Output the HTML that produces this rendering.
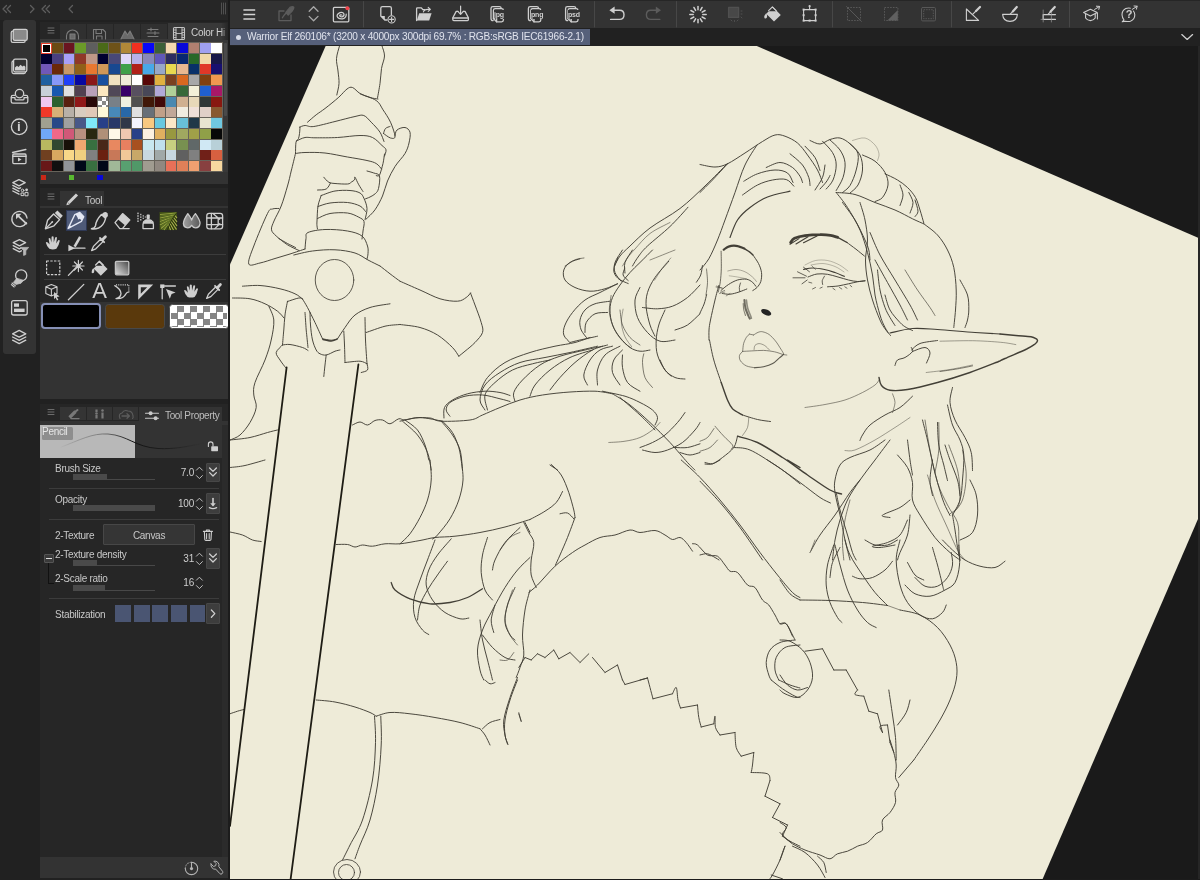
<!DOCTYPE html>
<html lang="en">
<head>
<meta charset="utf-8">
<title>Warrior Elf 260106 - Clip Studio Paint</title>
<style>
*{box-sizing:border-box;margin:0;padding:0}
html,body{width:1200px;height:880px;overflow:hidden;background:#202020}
body{font-family:"Liberation Sans",sans-serif;color:#d6d6d6;font-size:10px;position:relative}
.abs{position:absolute}
svg{position:absolute;overflow:visible}
.ic{stroke:#cfcfcf;fill:none;stroke-width:1.3;stroke-linecap:round;stroke-linejoin:round}
.fl{fill:#cfcfcf;stroke:none}
.dim{opacity:.33}
#sw{position:absolute;left:40.600px;top:42.400px;width:182px;height:129.600px;display:grid;grid-template-columns:repeat(16,11.370px);grid-auto-rows:10.770px;background:#67635a}
#sw i{display:block;margin:0.400px 0.450px}
#sw i.tr{background:conic-gradient(#fff 25%,#888 0 50%,#fff 0 75%,#888 0);background-size:8px 8px}
.lbl{position:absolute;will-change:transform;color:#c8c8c8;font-size:10px;white-space:nowrap;letter-spacing:-0.28px}
.num{position:absolute;will-change:transform;color:#cecece;letter-spacing:-0.2px;font-size:10px;text-align:right;white-space:nowrap}
.sl{position:absolute;height:6px;border-bottom:1px solid #484848}
.sl b{position:absolute;left:0;top:0;height:6px;background:#4a4a4a;display:block}
.btn{position:absolute;background:#3d3d3d;border:1px solid #474747;border-radius:1px}
.hr{position:absolute;height:1px;background:#3c3c3c}
</style>
</head>
<body>
<!-- ============ LEFT DOCK ============ -->
<div class="abs" style="left:0;top:0;width:228px;height:880px;background:#212121"></div>
<div class="abs" style="left:0;top:0;width:228px;height:20px;background:#262626"></div>
<!-- icon strip -->
<div class="abs" style="left:3px;top:20px;width:33px;height:334px;background:#333;border-radius:3px"></div>
<!-- color history panel -->
<div class="abs" style="left:40px;top:22px;width:188px;height:162px;background:#383838"></div>
<div class="abs" style="left:40px;top:22px;width:188px;height:17px;background:#262626"></div>
<div class="abs" style="left:60px;top:24px;width:26px;height:15px;background:#303030"></div>
<div class="abs" style="left:87px;top:24px;width:26px;height:15px;background:#303030"></div>
<div class="abs" style="left:114px;top:24px;width:26px;height:15px;background:#303030"></div>
<div class="abs" style="left:141px;top:24px;width:26px;height:15px;background:#303030"></div>
<div class="abs" style="left:168px;top:23px;width:60px;height:17px;background:#383838"></div>
<div class="lbl" style="left:191px;top:27px;font-size:10px;color:#d0d0d0">Color Hi</div>
<div class="abs" style="left:221px;top:23px;width:7px;height:17px;background:linear-gradient(90deg,rgba(38,38,38,0),#262626)"></div>
<div id="sw">
<i style="background:#000000"></i><i style="background:#6b4a12"></i><i style="background:#6a1520"></i><i style="background:#6b9a28"></i><i style="background:#5e5e5e"></i><i style="background:#4a6a18"></i><i style="background:#6e5218"></i><i style="background:#b08838"></i><i style="background:#f03020"></i><i style="background:#0808f8"></i><i style="background:#3c6038"></i><i style="background:#f4d8b0"></i><i style="background:#0808d8"></i><i style="background:#b08070"></i><i style="background:#a0a0f0"></i><i style="background:#ffffff"></i><i style="background:#000030"></i><i style="background:#4a4080"></i><i style="background:#a8a0f8"></i><i style="background:#903828"></i><i style="background:#c09888"></i><i style="background:#000030"></i><i style="background:#484878"></i><i style="background:#e0d8f8"></i><i style="background:#b8b0e8"></i><i style="background:#8888b8"></i><i style="background:#6058b8"></i><i style="background:#2c2c60"></i><i style="background:#082870"></i><i style="background:#286828"></i><i style="background:#f0d8a8"></i><i style="background:#181848"></i><i style="background:#7058b8"></i><i style="background:#6a2808"></i><i style="background:#c89868"></i><i style="background:#906018"></i><i style="background:#e87830"></i><i style="background:#d09858"></i><i style="background:#184890"></i><i style="background:#40a048"></i><i style="background:#b02018"></i><i style="background:#48a8e8"></i><i style="background:#98a8c8"></i><i style="background:#e8d850"></i><i style="background:#e8b890"></i><i style="background:#083068"></i><i style="background:#e03828"></i><i style="background:#181070"></i><i style="background:#2060a0"></i><i style="background:#8898f8"></i><i style="background:#2040f8"></i><i style="background:#0808a0"></i><i style="background:#8a1818"></i><i style="background:#1850a0"></i><i style="background:#f0e0c0"></i><i style="background:#f0ecd8"></i><i style="background:#ffffff"></i><i style="background:#580808"></i><i style="background:#e0b040"></i><i style="background:#7a4020"></i><i style="background:#d86820"></i><i style="background:#a8a8a8"></i><i style="background:#804010"></i><i style="background:#f09850"></i><i style="background:#c8d0d8"></i><i style="background:#1858b0"></i><i style="background:#e0e0e0"></i><i style="background:#504050"></i><i style="background:#b8a0b8"></i><i style="background:#fce8c0"></i><i style="background:#504858"></i><i style="background:#380068"></i><i style="background:#585060"></i><i style="background:#484858"></i><i style="background:#b0a8d8"></i><i style="background:#b0d098"></i><i style="background:#386838"></i><i style="background:#f4f0d8"></i><i style="background:#2060d0"></i><i style="background:#a81868"></i><i style="background:#f0c8f0"></i><i style="background:#2c6030"></i><i style="background:#582010"></i><i style="background:#901818"></i><i style="background:#280808"></i><i class="tr"></i><i style="background:#788088"></i><i style="background:#f0f0e0"></i><i style="background:#505050"></i><i style="background:#401808"></i><i style="background:#400808"></i><i style="background:#4888b0"></i><i style="background:#d0b090"></i><i style="background:#e8d8b8"></i><i style="background:#303838"></i><i style="background:#881810"></i><i style="background:#f03828"></i><i style="background:#d8b078"></i><i style="background:#b8b0a8"></i><i style="background:#d8ccc0"></i><i style="background:#e0c8b8"></i><i style="background:#fff8d8"></i><i style="background:#4888b8"></i><i style="background:#2868a8"></i><i style="background:#e0e0e0"></i><i style="background:#687078"></i><i style="background:#c0a088"></i><i style="background:#c0a898"></i><i style="background:#f0ece0"></i><i style="background:#f0e0d8"></i><i style="background:#e0d0c8"></i><i style="background:#885830"></i><i style="background:#a0a090"></i><i style="background:#284888"></i><i style="background:#a0a0a0"></i><i style="background:#485888"></i><i style="background:#80e8f8"></i><i style="background:#284088"></i><i style="background:#283868"></i><i style="background:#303848"></i><i style="background:#f4f4fc"></i><i style="background:#f8c880"></i><i style="background:#68c8e0"></i><i style="background:#fce8c8"></i><i style="background:#68c0d8"></i><i style="background:#203848"></i><i style="background:#e8e4d0"></i><i style="background:#70c8e0"></i><i style="background:#70a8f8"></i><i style="background:#f06888"></i><i style="background:#d05878"></i><i style="background:#b89080"></i><i style="background:#282810"></i><i style="background:#b09078"></i><i style="background:#fff8e8"></i><i style="background:#f0c8b0"></i><i style="background:#284088"></i><i style="background:#fcf0e0"></i><i style="background:#e0b060"></i><i style="background:#989840"></i><i style="background:#a0a860"></i><i style="background:#a0a048"></i><i style="background:#90a048"></i><i style="background:#080808"></i><i style="background:#b8b860"></i><i style="background:#304830"></i><i style="background:#181008"></i><i style="background:#f0a870"></i><i style="background:#387040"></i><i style="background:#482818"></i><i style="background:#e88860"></i><i style="background:#e88060"></i><i style="background:#a85020"></i><i style="background:#c8e8f0"></i><i style="background:#c0e0ec"></i><i style="background:#c8d080"></i><i style="background:#789050"></i><i style="background:#606868"></i><i style="background:#d0e8f4"></i><i style="background:#b8d0d8"></i><i style="background:#704020"></i><i style="background:#d8a860"></i><i style="background:#f8d888"></i><i style="background:#f0d080"></i><i style="background:#808080"></i><i style="background:#6a2010"></i><i style="background:#c87858"></i><i style="background:#f0c898"></i><i style="background:#c8a868"></i><i style="background:#c8d8e0"></i><i style="background:#a0a8a8"></i><i style="background:#c8d8e0"></i><i style="background:#606060"></i><i style="background:#808080"></i><i style="background:#702018"></i><i style="background:#d86040"></i><i style="background:#681818"></i><i style="background:#101010"></i><i style="background:#909498"></i><i style="background:#000818"></i><i style="background:#387040"></i><i style="background:#000818"></i><i style="background:#a0b898"></i><i style="background:#58a070"></i><i style="background:#509868"></i><i style="background:#a09c90"></i><i style="background:#908880"></i><i style="background:#e87058"></i><i style="background:#e08058"></i><i style="background:#f0a070"></i><i style="background:#884040"></i><i style="background:#f8d8a0"></i></div>
<div class="abs" style="left:41px;top:42.800px;width:11.400px;height:10.800px;border:1px solid #e8402c;box-shadow:inset 0 0 0 1px #fff"></div>
<div class="abs" style="left:224px;top:43px;width:3px;height:73px;background:#4a4a4a;border-radius:1px"></div>
<div class="abs" style="left:40px;top:172px;width:188px;height:12px;background:#333"></div>
<div class="abs" style="left:41px;top:175px;width:5px;height:5px;background:#c82818"></div>
<div class="abs" style="left:69px;top:175px;width:5px;height:5px;background:#58b830"></div>
<div class="abs" style="left:97px;top:175px;width:6px;height:5px;background:#0808d8"></div>
<!-- tool panel -->
<div class="abs" style="left:40px;top:188px;width:188px;height:211px;background:#333"></div>
<div class="abs" style="left:40px;top:188px;width:188px;height:18px;background:#262626"></div>
<div class="abs" style="left:60px;top:191px;width:44px;height:15px;background:#333"></div>
<div class="lbl" style="left:85px;top:195px;color:#c8c8c8">Tool</div>
<div class="abs" style="left:40px;top:208px;width:188px;height:94px;background:#262626"></div>
<div class="hr" style="left:44px;top:254px;width:182px"></div>
<div class="hr" style="left:44px;top:279px;width:182px"></div>
<div class="abs" style="left:65.500px;top:210.300px;width:21.400px;height:21px;background:#4e5a78;border:1px solid #2e3854"></div>
<!-- colour chips -->
<div class="abs" style="left:40.500px;top:302.500px;width:60px;height:26px;background:#000;border:2px solid #8690b6;border-radius:4px"></div>
<div class="abs" style="left:105px;top:303.500px;width:59.500px;height:25px;background:#5a390c;border:1px solid #484848;border-radius:3.500px"></div>
<div class="abs" style="left:169px;top:303.500px;width:59.500px;height:25px;border:1px solid #4c4c4c;border-radius:3.500px;background:#fff"></div><div class="abs" style="left:171px;top:305.500px;width:55.500px;height:21px;border-radius:2px;background:#fff conic-gradient(#858585 25%,#fff 0 50%,#858585 0 75%,#fff 0);background-size:13px 13px;background-position:0 0"></div>
<!-- tool property panel -->
<div class="abs" style="left:40px;top:404px;width:188px;height:474px;background:#262626"></div>
<div class="abs" style="left:40px;top:404px;width:188px;height:20px;background:#262626"></div>
<div class="abs" style="left:60px;top:407px;width:26px;height:13px;background:#343434"></div>
<div class="abs" style="left:87px;top:407px;width:25px;height:13px;background:#343434"></div>
<div class="abs" style="left:113px;top:407px;width:25px;height:13px;background:#343434"></div>
<div class="abs" style="left:139px;top:407px;width:83px;height:14px;background:#333"></div>
<div class="lbl" style="left:165px;top:410px;color:#bdbdbd;letter-spacing:-0.350px">Tool Property</div>
<div class="abs" style="left:40px;top:421px;width:188px;height:4px;background:#333"></div>
<div class="abs" style="left:40px;top:424px;width:188px;height:34px;background:#333"></div>
<div class="abs" style="left:40px;top:425px;width:94.500px;height:33px;background:#b8b8b8"></div>
<div class="abs" style="left:42px;top:426.500px;width:31px;height:13px;background:#8e8e8e;border-radius:1.500px"></div>
<div class="lbl" style="left:42px;top:426px;color:#e8e8e8">Pencil</div>
<div class="lbl" style="left:55px;top:462.8px">Brush Size</div>
<div class="sl" style="left:73px;top:474px;width:82px"><b style="width:34px"></b></div>
<div class="num" style="left:160px;top:466.8px;width:34px">7.0</div>
<div class="btn" style="left:206px;top:463px;width:14px;height:19px"></div>
<div class="hr" style="left:49px;top:488px;width:170px"></div>
<div class="lbl" style="left:55px;top:493.8px">Opacity</div>
<div class="sl" style="left:73px;top:505px;width:82px;border-bottom:0"><b style="width:82px"></b></div>
<div class="num" style="left:160px;top:497.8px;width:34px">100</div>
<div class="btn" style="left:206px;top:493px;width:14px;height:21px"></div>
<div class="hr" style="left:49px;top:519px;width:170px"></div>
<div class="lbl" style="left:55px;top:529.8px">2-Texture</div>
<div class="btn" style="left:103px;top:524px;width:92px;height:21px;background:#353535"></div>
<div class="lbl" style="left:103px;top:529.8px;width:92px;text-align:center">Canvas</div>
<div class="lbl" style="left:55px;top:548.8px">2-Texture density</div>
<div class="sl" style="left:73px;top:560px;width:82px"><b style="width:24px"></b></div>
<div class="num" style="left:160px;top:552.8px;width:34px">31</div>
<div class="btn" style="left:206px;top:548px;width:14px;height:21px"></div>
<div class="abs" style="left:44px;top:554px;width:10px;height:9px;background:#3a3a3a;border:1px solid #555;border-radius:1px"></div>
<div class="abs" style="left:46px;top:558px;width:6px;height:1px;background:#ddd"></div>
<div class="abs" style="left:48px;top:563px;width:6px;height:21px;border-left:1px solid #111;border-bottom:1px solid #111"></div>
<div class="lbl" style="left:55px;top:572.8px">2-Scale ratio</div>
<div class="sl" style="left:73px;top:585px;width:82px"><b style="width:32px"></b></div>
<div class="num" style="left:160px;top:576.8px;width:34px">16</div>
<div class="hr" style="left:49px;top:598px;width:170px"></div>
<div class="lbl" style="left:55px;top:608.8px">Stabilization</div>
<div class="abs" style="left:115px;top:605px;width:16px;height:17px;background:#4a5572"></div>
<div class="abs" style="left:134px;top:605px;width:16px;height:17px;background:#4a5572"></div>
<div class="abs" style="left:152px;top:605px;width:16px;height:17px;background:#4a5572"></div>
<div class="abs" style="left:171px;top:605px;width:16px;height:17px;background:#4a5572"></div>
<div class="abs" style="left:190px;top:605px;width:15px;height:17px;background:#4a5572"></div>
<div class="btn" style="left:206px;top:603px;width:14px;height:21px"></div>
<div class="abs" style="left:222px;top:425px;width:6px;height:432px;background:#2b2b2b"></div>
<div class="abs" style="left:40px;top:857px;width:188px;height:21px;background:#333"></div>
<div class="abs" style="left:228px;top:0;width:2px;height:880px;background:#1c1c1c"></div>
<!-- top-left chevrons -->
<svg width="228" height="20" viewBox="0 0 228 20" style="left:0;top:0" fill="none" stroke="#5e5e5e" stroke-width="1.3" stroke-linecap="round" stroke-linejoin="round">
<path d="M6.5 5.5 L3 9 L6.5 12.5 M10.5 5.5 L7 9 L10.5 12.5"/>
<path d="M30.5 5.5 L34 9 L30.5 12.5"/>
<path d="M45.5 5.5 L42 9 L45.5 12.5 M49.5 5.5 L46 9 L49.5 12.5"/>
<path d="M72.5 5.5 L69 9 L72.5 12.5"/>
<path d="M221.5 3 V14 M223.5 3 V14 M225.5 3 V14" stroke="#505050" stroke-width="1"/>
</svg>
<!-- left icon strip -->
<svg width="33" height="334" viewBox="3 20 33 334" style="left:3px;top:20px" class="ic">
<!-- 1 sub view -->
<rect x="11.2" y="31.2" width="14" height="11.2" rx="1.6"/>
<rect x="13.2" y="29.4" width="14" height="11" rx="1.6" fill="#8a8a8a"/>
<!-- 2 navigator -->
<rect x="12" y="61" width="13.5" height="12.5" rx="1.5"/>
<rect x="13.6" y="59.2" width="13.2" height="12.6" rx="1.5" fill="#333"/>
<path class="fl" d="M15 70.5 V67.5 L17 65.8 L18.5 67 L20.5 64.8 L22.5 66.6 L24 65.6 L25.4 66.8 V70.5 Z" fill="#9a9a9a" stroke="none"/>
<!-- 3 material tray -->
<circle cx="19.5" cy="93.6" r="4.2"/>
<path d="M14.8 95.4 H13 Q11.2 95.4 11.2 97.2 V101.4 Q11.2 103.2 13 103.2 H26 Q27.8 103.2 27.8 101.4 V97.2 Q27.8 95.4 26 95.4 H24.2"/>
<path d="M11.4 97.6 H15 V99 Q15 99.8 15.8 99.8 H23.2 Q24 99.8 24 99 V97.6 H27.6"/>
<!-- 4 info -->
<circle cx="19.2" cy="126.8" r="7.8"/>
<!-- 5 animation clapper -->
<rect x="12.8" y="154" width="13.2" height="9.6" rx="1"/>
<path d="M12.6 152.6 L25.8 149.6 M13 156.2 H26" stroke-width="1.5"/>
<path d="M18 157.4 L21.6 159.4 L18 161.4 Z" class="fl"/>
<!-- 6 layers + shapes -->
<path d="M19 179.6 L25.2 182.6 L19 185.8 L12.8 182.6 Z M12.8 185.4 L19 188.6 L20.6 187.8 M12.8 188.2 L19 191.4 M12.8 191 L19 194.2"/>
<circle cx="22.6" cy="190.4" r="1.3" stroke-width="1"/><circle cx="26.6" cy="189.8" r="1.4" class="fl"/>
<rect x="21.4" y="193" width="2.4" height="2.6" stroke-width="1"/><rect x="25.4" y="192.4" width="2.6" height="3.4" stroke-width="1"/>
<!-- 7 quick access -->
<path d="M26.2 222.6 A7.6 7.6 0 1 1 27 218"/>
<path d="M17 214.8 L26.4 223.6" stroke-width="1.8"/>
<path d="M16 213.8 H21.4 L16 219.2 Z" class="fl" stroke="#cfcfcf" stroke-width=".6"/>
<!-- 8 layers + funnel -->
<path d="M19.4 239.6 L25.6 242.6 L19.4 245.8 L13.2 242.6 Z M13.2 245.6 L19.4 248.8 L21 248 M13.2 248.6 L19.4 251.8 L21.4 250.8"/>
<path d="M20.8 247.4 H28.6 L25.8 250.8 V254.6 L23.6 255.4 V250.8 Z" fill="#b8b8b8" stroke="#b8b8b8" stroke-width=".8"/>
<!-- 9 bulb -->
<circle cx="21.2" cy="275.4" r="5.6"/>
<path d="M16.6 278.6 L13.4 282.4 L16 284.4 L21 283.2 L23.2 280.6 Z" fill="#c4c4c4" stroke="#c4c4c4" stroke-width=".8"/>
<path d="M12 283 L15.4 285.8 M11.4 284.6 L14.2 287" stroke-width="1.1"/>
<!-- 10 item bank -->
<rect x="11.6" y="300.6" width="15.6" height="14.4" rx="2"/>
<rect x="14" y="303.4" width="5" height="3.4" class="fl" fill="#c4c4c4"/>
<rect x="14" y="308.6" width="10.6" height="3.4" class="fl" fill="#c4c4c4"/>
<!-- 11 layers -->
<path d="M19.2 330.4 L25.8 333.8 L19.2 337.2 L12.6 333.8 Z M12.6 337 L19.2 340.4 L25.8 337 M12.6 340.2 L19.2 343.6 L25.8 340.2"/>
</svg>
<div class="abs" style="will-change:transform;left:14.200px;top:119px;width:10px;height:16px;font-size:13.500px;line-height:16px;font-weight:bold;color:#cfcfcf;text-align:center">i</div>
<!-- panel header glyphs -->
<svg width="188" height="400" viewBox="40 22 188 400" style="left:40px;top:22px" class="ic">
<path d="M48 28 H54 M48 30.5 H54 M48 33 H54" stroke="#6c6c6c" stroke-width="1"/>
<path d="M48 194 H54 M48 196.500 H54 M48 199 H54" stroke="#6c6c6c" stroke-width="1"/>
<path d="M48 409.500 H54 M48 412 H54 M48 414.500 H54" stroke="#6c6c6c" stroke-width="1"/>
<!-- color tab icons (cropped) -->
<g stroke="#7c7c7c" stroke-width="1.1">
<path d="M66.500 39 V36 A6 6 0 0 1 78.500 36 V39"/><rect x="70" y="34" width="5" height="5" fill="#6a6a6a"/>
<path d="M93.500 39 V29.500 H103 L105.500 32 V39 M96 29.500 V33.500 H101.500 V29.500 M96.500 39 V36 H102 V39"/>
<path d="M121 39 L125 31 L127.500 35 L130 31 L134 39" fill="#6a6a6a"/>
<path d="M148 29.500 H158 M147 33 H159 M148 36.500 H158 M151 28 V31 M155 31.500 V34.500"/>
</g>
<g stroke="#c4c4c4" stroke-width="1.1"><rect x="173.500" y="27.500" width="11" height="12" rx="1"/><path d="M176 27.500 V39.500 M182 27.500 V39.500 M176 33.500 H182 M174 30 H176 M174 32.500 H176 M174 35 H176 M174 37.500 H176 M182 30 H184 M182 32.500 H184 M182 35 H184 M182 37.500 H184" stroke-width=".9"/></g>
<!-- tool tab pencil -->
<path d="M68.500 203 L77 194.500" stroke="#d0d0d0" stroke-width="3" stroke-linecap="butt"/>
<path d="M66.400 205.200 L67.200 202 L69.600 204.400 Z" class="fl"/>
<!-- tool property tabs -->
<g stroke="#787878" stroke-width="1.200">
<path d="M69.500 417.500 L75.500 411.500" stroke-width="3.200" stroke-linecap="butt"/><path d="M75.500 411.500 L77.500 410" stroke-width="2"/><path d="M71 418.600 H79" stroke-width="1.400"/>
<path d="M96.500 409.500 V412 M96.500 415 V418.500 M102.500 412.500 V418.500" stroke-width="2.200" stroke-linecap="butt"/><circle cx="96.500" cy="413.500" r="1.300" fill="#787878" stroke="none"/><circle cx="102.500" cy="410.500" r="1.300" fill="#787878" stroke="none"/>
<path d="M120 418.500 Q118 414 122 413 Q124 409.500 128 411 Q132.500 411 133 416 Q133.500 418 132.500 418.500" stroke="#5c5c5c" stroke-width="1.100"/><path d="M122 416 H129 M127 413.800 L129.400 416 L127 418.200" stroke="#5c5c5c" stroke-width="1.300"/>
</g>
<g stroke="#c8c8c8" stroke-width="1.100"><path d="M145.500 413.300 H158.500 M145.500 418.300 H158.500"/><circle cx="150.600" cy="413.300" r="2" fill="#c8c8c8" stroke="none"/><circle cx="155.600" cy="418.300" r="2" fill="#c8c8c8" stroke="none"/></g>
</svg>
<!-- tool grid icons -->
<svg width="188" height="100" viewBox="40 205 188 100" style="left:40px;top:205px" class="ic">
<!-- r1: pen -->
<path d="M45.400 228.800 L47.600 220.200 L53.600 214 L59.600 219.600 L54 225.800 Z" stroke-width="1.400"/><path d="M46 228.200 L51.800 222.400" stroke-width="1.300"/><circle cx="52.300" cy="221.900" r=".9" class="fl"/>
<path d="M54.800 213 L57.400 210.600 L62.800 215.800 L60.400 218.400 Z" class="fl"/>
<!-- pencil (selected) -->
<path d="M68.200 228.400 L74.800 214.600 L79.800 212.400 L83.800 216.600 L81.400 221.400 Z" stroke="#e4e8f4"/>
<path d="M75.600 214.200 L79.800 212.400 L83.800 216.600 L81.600 220.600 L79.800 218.800 L78.200 219.400 L77.400 217.200 Z" fill="#e4e8f4" stroke="none"/>
<path d="M68.200 228.400 L69.600 225 L71.600 227 Z" fill="#e4e8f4" stroke="none"/>
<!-- brush -->
<path d="M91.400 228.800 Q95 228.200 95.600 225.400 Q96 220.400 101.400 214.600 L105.600 218.600 Q103.600 225.600 98.600 228 Q94.600 229.600 91.400 228.800 Z" stroke-width="1.400"/>
<path d="M101.400 214.600 L103.600 212.400 Q106 211.400 107.400 213.200 Q108.600 215.200 107.400 216.800 L105.600 218.600 Z" class="fl" stroke="#cfcfcf" stroke-width=".6"/>
<!-- eraser -->
<path d="M115 222.600 L122.600 213.600 L129.800 220 L122.400 228.600 H119.800 Z M120 228.600 H129.200"/>
<path d="M122.600 213.600 L129.800 220 L125.200 225.400 L117.800 219.200 Z" class="fl"/>
<!-- airbrush -->
<path d="M143 228.600 V224.400 Q143 221.800 145 220.600 L147 219.800 H149.400 L151.400 220.600 Q153.400 221.800 153.400 224.400 V228.600 Z"/>
<path d="M143.200 222.600 H153.200 M145 220.800 H151.400" stroke-width="2.200" stroke-linecap="butt"/>
<rect x="146.600" y="214.600" width="3.200" height="4.400" rx=".8" class="fl"/>
<g class="fl" opacity=".8"><rect x="137.200" y="212.600" width="1.600" height="1.600"/><rect x="137.200" y="215.200" width="1.600" height="1.600"/><rect x="137.200" y="217.800" width="1.600" height="1.600"/><rect x="137.200" y="220.400" width="1.600" height="1.600"/><rect x="140" y="213.800" width="1.500" height="1.500"/><rect x="140" y="216.400" width="1.500" height="1.500"/><rect x="140" y="219" width="1.500" height="1.500"/><rect x="142.600" y="215.200" width="1.400" height="1.400"/><rect x="142.600" y="217.600" width="1.400" height="1.400"/><rect x="144.800" y="216.400" width="1.200" height="1.200"/></g>
<!-- decoration leaf thumbnail -->
<rect x="159.500" y="212" width="17.500" height="18" fill="#3e4e16" stroke="none"/>
<g stroke-width="1.200" stroke-linecap="butt" fill="none">
<path d="M176.500 213 L160 214.500 M175 214.800 L160 218 M173.500 216.600 L160 221.500 M172 218.400 L160 225 M170.600 220.200 L161 228.500 M169.400 222 L164 230" stroke="#93a040"/>
<path d="M175.800 214 L160 216.200 M174.200 215.800 L160 219.800 M172.800 217.600 L160 223.200 M171.300 219.400 L160.500 226.800 M170 221.200 L162.500 229.600" stroke="#5f7224"/>
<path d="M174.800 215.600 L177 218 M173.400 217.200 L177 222 M172 219 L177 226 M170.800 220.800 L176.500 229.500 M169.600 222.600 L173.500 230 M168.600 224.600 L170.600 230" stroke="#a3aa4c"/>
<path d="M174 216.400 L177 220 M172.700 218.200 L177 224 M171.400 220 L177 228 M170.200 221.800 L175 230 M169.100 223.600 L172 230" stroke="#2a360c" stroke-width=".9"/>
<path d="M177 212.600 Q171 219 167.500 230" stroke="#2a360c" stroke-width="1"/>
</g>
<!-- blend drops -->
<defs><linearGradient id="gd" x1="0" y1="0" x2="1" y2="0"><stop offset="0" stop-color="#a0a0a0"/><stop offset="1" stop-color="#5a5a5a"/></linearGradient>
<linearGradient id="gq" x1="0" y1="1" x2="1" y2="0"><stop offset="0" stop-color="#e0e0e0"/><stop offset="1" stop-color="#484848"/></linearGradient></defs>
<path d="M187.800 213.600 Q191.400 218.400 191.600 220 Q193 216.200 195.400 213.600 Q200.200 220.200 200 223.400 Q199.600 227.800 195.600 227.800 Q193 227.800 191.600 225.400 Q190.400 227.800 187.800 227.800 Q183.600 227.600 183.400 223.400 Q183.400 220 187.800 213.600 Z" fill="url(#gd)" stroke="#c8c8c8"/>
<!-- frame grid -->
<rect x="206.800" y="213.400" width="15.800" height="15.400" rx="2.400"/>
<path d="M211.400 213.400 V228.800 M218.200 218.200 V224.800 M206.800 218 H222.600 M206.800 224.600 H222.600 M213 213.600 L219.600 219.200 M219.800 223.800 L214.800 228.600"/>
<!-- r2: hand -->
<g id="hand"><path d="M49.400 248.800 Q46.600 246 45.800 242.400 Q46.600 241.400 47.800 242.400 L49.600 244.600 L48.600 238.600 Q49.400 237.400 50.400 238.600 L51.400 242.600 L51.600 236.800 Q52.600 235.800 53.600 236.800 L53.800 242.600 L55.200 237.400 Q56.200 236.600 57 237.600 L56.200 243.600 L58.200 240.200 Q59.400 239.600 59.800 240.800 Q58.800 246 56.400 248.800 Q52.800 250 49.400 248.800 Z" class="fl"/></g>
<!-- ruler pen -->
<path d="M74.600 246.600 L80.200 236.800" stroke-width="2.600" stroke-linecap="butt"/>
<path d="M68.400 251.200 V244.800 L75 248.200 Z" class="fl"/><path d="M73.800 248.200 H85"/>
<!-- eyedropper -->
<g id="drop"><path d="M91.600 250.600 L93.400 246.400 L100.600 239.200 L103 241.600 L95.800 248.800 Z"/><path d="M100 238 L104.200 242.200" stroke-width="1.800"/><path d="M102.600 239.600 L105.400 236.800" stroke-width="2.800"/></g>
<!-- r3: marquee -->
<rect x="46.600" y="261" width="13.200" height="13.600" stroke-dasharray="2.400 1.300" stroke-linecap="butt" stroke-width="1.200"/>
<!-- wand -->
<path d="M68.400 275.400 L76.600 267"/>
<path d="M78.400 260.400 V271.600 M72.800 266 H84 M74.400 262 L82.400 270 M82.400 262 L74.400 270" stroke-width="1.200"/><circle cx="78.400" cy="266" r="2.200" class="fl"/>
<!-- bucket -->
<path d="M99.400 260.800 L107.600 269 L100.800 275.800 L93.600 268.600 L96.400 265.800 H102.400 L99.400 262.600 Z" class="fl"/>
<path d="M95.600 265 L99.400 261.200 L103.200 265"/>
<path d="M93.200 268.200 Q91 270.400 91.600 272.600 Q92.800 273.800 94 272.400 Q94.600 270.600 94.200 269.200 Z" class="fl"/>
<!-- gradient -->
<rect x="115.400" y="261.400" width="13.400" height="13.400" rx="1.200" fill="url(#gq)" stroke="#c4c4c4"/>
<!-- r4: 3d cube + cursor -->
<path d="M51.400 284.600 L57 286.800 V293.400 L51.400 296 L45.800 293.400 V286.800 Z M45.800 286.800 L51.400 289.200 L57 286.800 M51.400 289.200 V296" stroke-width="1.100"/>
<path d="M54 292 L59.600 296.600 L56.800 297 L58.400 299.800 L57 300.400 L55.600 297.600 L54 299.200 Z" class="fl" stroke="#262626" stroke-width=".5"/>
<!-- line -->
<path d="M68.400 299.800 L83.800 284.400"/>
<!-- balloon -->
<path d="M114.800 285.600 Q120.800 289 121 293.600 Q120.600 297.600 116 298.600 Q123.400 299.200 125.800 294 Q126.800 292 129 291.800" />
<path d="M116 284.800 H128.800 V290.600" stroke-dasharray="1.100 1.100" stroke-linecap="butt"/>
<!-- triangle ruler -->
<path d="M138.200 284.600 H153.200 L138.200 299.800 Z M140.800 287.200 V293.800 L147.200 287.200 Z" fill="#cfcfcf" fill-rule="evenodd" stroke="none"/>
<!-- object select -->
<rect x="160.200" y="284.400" width="4.200" height="3.600" class="fl"/><path d="M162.200 288 V298.800 M164.400 286 H175.400"/>
<path d="M166 289 L175.600 292.400 L171.600 294 L169.800 298.800 Z" class="fl"/>
<!-- hand 2 / dropper 2 -->
<use href="#hand" transform="translate(138.200 48.200)"/>
<use href="#drop" transform="translate(115 47.800)"/>
</svg>
<div class="abs" style="will-change:transform;left:90px;top:280px;width:19px;height:22px;font-size:22px;line-height:22px;color:#cfcfcf;text-align:center">A</div>
<svg width="188" height="460" viewBox="40 420 188 460" style="left:40px;top:420px" class="ic">
<defs><linearGradient id="gs" x1="0" x2="1"><stop offset="0" stop-color="#222" stop-opacity="0"/><stop offset=".25" stop-color="#555" stop-opacity=".5"/><stop offset=".5" stop-color="#111" stop-opacity="1"/><stop offset=".75" stop-color="#1a1a1a" stop-opacity=".8"/><stop offset="1" stop-color="#222" stop-opacity="0"/></linearGradient></defs>
<path d="M60 447.500 C80 440 92 433 108 434 C128 435.500 135 447 158 448.500 C175 449.500 190 446 204 443" stroke="url(#gs)" stroke-width="1"/>
<!-- lock -->
<rect x="211.200" y="446.200" width="6.800" height="5" rx=".6" class="fl"/><path d="M208.400 446.400 V444.200 A2.300 2.300 0 0 1 213 444.200 V446" stroke-width="1.100"/>
<!-- spinners -->
<g stroke="#bdbdbd" stroke-width="1">
<path d="M196.400 470.200 L199.400 467.200 L202.400 470.200 M196.400 475.600 L199.400 478.600 L202.400 475.600"/>
<path d="M196.400 501.200 L199.400 498.200 L202.400 501.200 M196.400 506.600 L199.400 509.600 L202.400 506.600"/>
<path d="M196.400 556.200 L199.400 553.200 L202.400 556.200 M196.400 561.600 L199.400 564.600 L202.400 561.600"/>
<path d="M196.400 580.200 L199.400 577.200 L202.400 580.200 M196.400 585.600 L199.400 588.600 L202.400 585.600"/>
</g>
<!-- double chevrons -->
<path d="M209.600 468 L213 471.400 L216.400 468 M209.600 472.600 L213 476 L216.400 472.600"/>
<path d="M209.600 554 L213 557.400 L216.400 554 M209.600 558.600 L213 562 L216.400 558.600"/>
<!-- download -->
<path d="M213 498.600 V505" stroke-width="1.600"/><path d="M210.200 503.200 L213 506.400 L215.800 503.200 Z" class="fl" stroke="#cfcfcf" stroke-width=".6"/><path d="M209.400 507.600 Q213 509.600 216.600 507.600"/>
<!-- trash -->
<path d="M203.400 531.400 H212.400 M206.400 531.200 V530 H209.400 V531.200 M204.400 532.400 L204.800 539.400 Q204.900 540.400 205.900 540.400 H209.900 Q210.900 540.400 211 539.400 L211.400 532.400 M206.600 533.600 V538.600 M209.200 533.600 V538.600" stroke-width="1.100"/>
<!-- chevron right -->
<path d="M211.400 610 L214.800 613.600 L211.400 617.200"/>
<!-- bottom bar icons -->
<g stroke="#b4b4b4" stroke-width="1.100"><path d="M191.500 862.200 A6.200 6.200 0 1 1 185.300 868.400"/><path d="M185.300 868.400 A6.200 6.200 0 0 1 191.500 862.200" stroke-dasharray="1.200 1.400" stroke-opacity=".6"/><path d="M191.500 862.400 V867.600"/><circle cx="191.500" cy="868.600" r="1.600" fill="#b4b4b4" stroke="none"/>
<path d="M211 864 L213.400 866.400 L215.600 865.800 L216.200 863.600 L213.800 861.200 A4.200 4.200 0 0 1 218.800 866.600 L222.600 871.400 Q223.200 872.800 222 873.800 Q220.800 874.600 219.800 873.600 L215.800 869.200 A4.200 4.200 0 0 1 211 864 Z" stroke-width="1"/></g>
</svg>
<!-- ============ TOP BAR ============ -->
<div class="abs" style="left:230px;top:0;width:970px;height:28px;background:#333;border-top:1px solid #262626"></div>
<div class="abs" style="left:230px;top:28px;width:970px;height:18px;background:#212121"></div>
<div class="abs" style="left:230px;top:29px;width:360px;height:16px;background:#56607a"></div>
<div class="abs" style="left:236px;top:35px;width:5px;height:5px;border-radius:50%;background:#d8dce8"></div>
<div class="lbl" style="left:247px;top:31px;font-size:10.1px;color:#dfe2ec;letter-spacing:-0.225px">Warrior Elf 260106* (3200 x 4000px 300dpi 69.7% : RGB:sRGB IEC61966-2.1)</div>
<svg width="970" height="46" viewBox="230 0 970 46" style="left:230px;top:0" class="ic">
<g stroke="#474747" stroke-width="1"><path d="M363.500 1.500 V27 M594.500 1.500 V27 M676.500 1.500 V27 M832.500 1.500 V27 M951.500 1.500 V27 M1069.500 1.500 V27"/></g>
<!-- hamburger -->
<path d="M243.400 10 H255.200 M243.400 14.500 H255.200 M243.400 19 H255.200" stroke="#d4d4d4" stroke-width="1.600" stroke-linecap="butt"/>
<!-- dim: draw out -->
<g stroke="#5c5c5c" fill="none"><path d="M284 11 H279 V20.600 H291 V15"/><path d="M282.400 17.800 Q283.600 14.600 286.800 12.600" /><path d="M285.800 12.400 L290 7.400 Q292.600 6 293.800 7.200 Q294 9 292 11.200 L288.200 15 Z" fill="#5c5c5c"/></g>
<!-- up/down -->
<path d="M309.200 11.200 L313.600 6.800 L318 11.200 M309.200 16.400 L313.600 20.800 L318 16.400" stroke="#a8a8a8"/>
<!-- clip studio swirl -->
<rect x="333.400" y="7.400" width="15.400" height="14.400" rx="1" stroke="#d0d0d0"/>
<path d="M341.800 15 Q340 14.400 339.600 15.600 Q339.800 17 342 16.800 Q344.400 16.200 344 14 Q343 11.800 340 12.600 Q336.600 14 337.200 16.600 Q338.400 19.400 342.600 18.800 Q346.400 17.800 346.200 14.200" stroke="#d0d0d0" stroke-width="1.200"/>
<circle cx="347.400" cy="8.200" r="2" fill="#f0444c" stroke="none"/>
<!-- new -->
<path d="M391.400 15 V8.200 Q391.400 6.600 389.800 6.600 H382.400 Q380.800 6.600 380.800 8.200 V16 L384.800 20 H387" />
<path d="M380.800 16 H384.800 V20 Z" class="fl"/>
<circle cx="391.600" cy="19.400" r="3.600" fill="#333" stroke-width="1.100"/><path d="M389.600 19.400 H393.600 M391.600 17.400 V21.400" stroke-width="1.100"/>
<!-- open -->
<path d="M416.600 20.600 V8.600 Q416.600 7.800 417.400 7.800 H421.400 L422.800 9.600 H424.600"/>
<path d="M416.800 20.600 L419.200 13.200 H431.600 L429.200 20.600 Z" class="fl" stroke="#cfcfcf" stroke-width=".8"/>
<path d="M423.400 12 Q424 9.400 428 9.400 H429.600 M428.200 7.400 L430.400 9.400 L428.200 11.400" stroke-width="1.100"/>
<!-- save -->
<path d="M456.200 11.400 L452.800 17.800 V19.600 Q452.800 20.600 453.800 20.600 H467.400 Q468.400 20.600 468.400 19.600 V17.800 L465 11.400 M456.200 11.400 H458 M463.200 11.400 H465"/>
<path d="M453.200 18 H468" stroke-width="1.600"/>
<path d="M460.600 6.200 V13.600 M457.800 11.400 L460.600 14.400 L463.400 11.400" stroke-width="1.200"/>
<!-- jpg/png/psd -->
<g id="doc"><path d="M493.200 20.600 Q491 20.600 491 18.400 V8.400 Q491 6.600 492.800 6.600 H499.400 Q501 6.600 501.200 8.200"/><path d="M503.400 17.400 V20 Q503.400 21.800 501.600 21.800 H496.600 L493.400 18.600 V10.400 Q493.400 8.600 495.200 8.600 H501.600 Q503.400 8.600 503.400 10.400 V11"/><path d="M493.400 18.600 H496.600 V21.800"/></g>
<use href="#doc" transform="translate(37.400 0)"/>
<use href="#doc" transform="translate(74.600 0)"/>
<!-- undo -->
<path d="M614.400 10.200 H619.600 Q624 10.200 624 14.800 Q624 19.400 619.600 19.400 H610.600" stroke-width="1.400"/>
<path d="M609.400 10.200 L614.600 6.600 V13.800 Z" class="fl"/>
<!-- redo dim -->
<g stroke="#5c5c5c"><path d="M656 10.200 H650.800 Q646.400 10.200 646.400 14.800 Q646.400 19.400 650.800 19.400 H659.800" stroke-width="1.400"/>
<path d="M661 10.200 L655.800 6.600 V13.800 Z" fill="#5c5c5c" stroke="none"/></g>
<!-- spinner -->
<g stroke="#cfcfcf" stroke-width="1.500" stroke-linecap="round">
<path d="M698 6.400 V9.800"/><path d="M698 6.400 V9.800" transform="rotate(30 698 14.600)"/><path d="M698 6.400 V9.800" transform="rotate(60 698 14.600)"/><path d="M698 6.400 V9.800" transform="rotate(90 698 14.600)"/><path d="M698 6.400 V9.800" transform="rotate(120 698 14.600)"/><path d="M698 6.400 V9.800" transform="rotate(150 698 14.600)"/><path d="M698 6.400 V9.800" transform="rotate(180 698 14.600)"/><path d="M698 6.400 V9.800" transform="rotate(210 698 14.600)"/><path d="M698 6.400 V9.800" transform="rotate(240 698 14.600)"/><path d="M698 6.400 V9.800" transform="rotate(270 698 14.600)"/><path d="M698 6.400 V9.800" transform="rotate(300 698 14.600)"/><path d="M698 6.400 V9.800" transform="rotate(330 698 14.600)"/></g>
<!-- dim clear -->
<g stroke="#505050"><rect x="728.600" y="7.400" width="10" height="10" fill="#484848"/><path d="M731 20 L732 21 M734.500 20.500 V21.500 M738 20 L737 21 M741 11 H742 M741 14 H742 M741 17 L742 18" stroke-width="1"/></g>
<!-- fill -->
<path d="M772.400 6.600 L780.800 15 L774 21.600 L766.200 13.800 L768.800 11.200 H776.200 L772.400 7.800 Z" class="fl"/>
<path d="M768.600 10.600 L772.400 6.800 L776.200 10.600" stroke-width="1.100"/>
<path d="M766 13.400 Q763.800 15.400 764.400 18 Q765.600 19.200 766.800 17.800 Q767.400 16 767 14.400 Z" class="fl"/>
<!-- transform -->
<rect x="803.600" y="9.600" width="12" height="11" stroke-width="1.100"/>
<path d="M809.600 9.600 V6.400" stroke-width="1.100"/><g class="fl"><circle cx="809.600" cy="6.200" r="1.100"/><rect x="802.600" y="8.600" width="2" height="2"/><rect x="814.600" y="8.600" width="2" height="2"/><rect x="802.600" y="19.600" width="2" height="2"/><rect x="814.600" y="19.600" width="2" height="2"/><rect x="808.600" y="19.600" width="2" height="2"/><rect x="802.600" y="14.200" width="2" height="2"/><rect x="814.600" y="14.200" width="2" height="2"/></g>
<!-- deselect dim -->
<g stroke="#585858" stroke-width="1"><rect x="847.500" y="7.500" width="13" height="13" stroke-dasharray="1.600 1.200" stroke-linecap="butt"/><path d="M846.600 6.600 L861.400 21.400"/></g>
<!-- invert dim -->
<g stroke="#585858" stroke-width="1"><rect x="884.500" y="7.500" width="13.400" height="13" stroke-dasharray="1.600 1.200" stroke-linecap="butt"/><path d="M897.800 10 V20.400 H887.400 Z" fill="#606060" stroke="none"/></g>
<!-- border dim -->
<g stroke="#585858" stroke-width="1"><rect x="921.500" y="7.500" width="14" height="13.400" rx="1.200"/><rect x="923.700" y="9.700" width="9.600" height="9" stroke-dasharray="1.400 1.100" stroke-linecap="butt"/></g>
<!-- snap ruler -->
<path d="M966.400 9 V20.400 H978.600 Z" stroke-width="1.100"/><path d="M972.600 14.400 L976 11" stroke-width="1.100"/><path d="M976 11 L980 7" stroke-width="2.200"/>
<!-- snap special -->
<path d="M1002.600 14.400 H1017.400 Q1016.800 21.400 1010 21.400 Q1003.200 21.400 1002.600 14.400 Z" stroke-width="1.100"/><path d="M1010 14.400 L1012.800 11.400" stroke-width="1.100"/><path d="M1012.800 11.400 L1016.800 7" stroke-width="2.200"/>
<!-- snap grid -->
<path d="M1043.200 14.600 V19.400 H1055.400 M1043.200 14.600 H1055.400" stroke-width="1.300"/><path d="M1043.200 10 V22 M1051.400 12 V22 M1041 19.400 H1043" stroke-width=".7" stroke="#9a9a9a"/><path d="M1048 14.400 L1050.600 11.600" stroke-width="1.100"/><path d="M1050.600 11.600 L1054.800 7" stroke-width="2.200"/>
<!-- grad cap -->
<path d="M1083.600 12.600 L1090.400 9.200 L1097.200 12.600 L1090.400 16 Z M1085.600 14 V18 Q1087.400 20.600 1090.400 20.600 Q1093.400 20.600 1095.200 18 V14 M1097.400 13 V19" stroke-width="1.100"/>
<path d="M1094.600 9.400 L1099.400 6.600 M1096.400 6.200 L1099.600 6.400 L1098.800 9.400" stroke-width="1"/>
<!-- help -->
<path d="M1124 20 L1122.200 21.800 L1125.800 21.200 Q1128 21.800 1130.400 21.200 Q1134.800 19.600 1134.800 14.800 Q1134.600 12.400 1133.400 11 M1130.400 8.200 Q1128 7.600 1125.800 8.600 Q1122 10.600 1122 14.800 Q1122.200 18 1124 20" stroke-width="1.100"/>
<path d="M1132.200 9.400 L1137 6.400 M1134 6 L1137.200 6.200 L1136.400 9.200" stroke-width="1"/>
<!-- tab bar chevron -->
<path d="M1181.800 34.600 L1187.200 39.400 L1192.600 34.600" stroke="#d0d0d0" stroke-width="1.300"/>
</svg>
<div class="abs" style="will-change:transform;left:494px;top:9.500px;width:12px;font-size:7px;line-height:9px;font-weight:bold;color:#cfcfcf;background:#333;letter-spacing:-0.2px">jpg</div>
<div class="abs" style="will-change:transform;left:530.600px;top:9.500px;width:14px;font-size:7px;line-height:9px;font-weight:bold;color:#cfcfcf;background:#333;letter-spacing:-0.2px">png</div>
<div class="abs" style="will-change:transform;left:568px;top:9.500px;width:13.600px;font-size:7px;line-height:9px;font-weight:bold;color:#cfcfcf;background:#333;letter-spacing:-0.2px">psd</div>
<div class="abs" style="will-change:transform;left:1125px;top:8px;width:8px;font-size:11px;line-height:13px;font-weight:bold;color:#cfcfcf;text-align:center">?</div>
<!-- ============ CANVAS ============ -->
<div class="abs" style="left:230px;top:46px;width:968px;height:834px;background:#1a1a1a;overflow:hidden">
<svg width="968" height="834" viewBox="230 46 968 834" style="left:0;top:0">
<polygon points="325.6,46 756.8,46 1198,237.8 1198,519 1042.2,880 230,880 230,264.6" fill="#eeebd8"/>
<g id="art" fill="none" stroke="#423f36" stroke-width="0.95" stroke-linecap="round" stroke-linejoin="round">
<path stroke-width="0.72" stroke-opacity="0.7" d="M716.5 286L722.5 288.4M719.5 293.5L724.8 292M726.2 295.9L730 293.5"/>
<path stroke-width="0.72" d="M812.5 289L815.5 287.5M820 288.2L822.2 287.2M832.8 288.2L835 289.8M839.5 287.5L841.8 289M844.8 286.8L847 288.2M850 285.2L851.8 286.8M808.8 282.2L811.8 283"/>
<path stroke-width="0.81" stroke-opacity="0.4" d="M729.2 275.8C730.6 276 734.6 276.5 737.5 277C740.4 277.5 745 278.5 746.5 278.8M805 265C806.8 264.2 811.8 261.2 815.5 260.5C819.2 259.8 823.5 259.8 827.5 260.5C831.5 261.2 836.1 263.2 839.5 265C842.9 266.8 846.5 270 847.9 271M811 265C813 264.8 819 263.2 823 263.5C827 263.8 831.5 265.1 835 266.5C838.5 267.9 842.5 271 844 271.9"/>
<path stroke-width="0.81" stroke-opacity="0.5" d="M727.8 271C729.1 270.8 733.1 269.4 736 269.5C738.9 269.6 742.2 270.5 745 271.8C747.8 273 750.6 275.4 752.5 277C754.4 278.6 755.8 280.8 756.4 281.5"/>
<path stroke-width="0.81" stroke-opacity="0.6" d="M754.1 349.5C754.2 348.9 754.2 346.4 755 345.4C755.8 344.5 757.5 343.6 759.1 343.6C760.7 343.6 762.8 344.4 764.5 345.4C766.3 346.5 768.7 349.2 769.5 350"/>
<path stroke-width="0.81" stroke-opacity="0.7" d="M811.8 265.8L815.5 269.5"/>
<path stroke-width="0.81" d="M740.5 283C740.3 283.8 739.4 286.1 739.3 287.5C739.2 288.9 739.7 290.8 739.8 291.4M824.5 276.2C824.1 277 822.5 279.4 822.2 280.8C822 282.1 822.6 283.9 822.7 284.5M793 277.8L805 277.8M797.5 271.8L806.5 276.2M803.5 267.2L809.5 271.8M802 283.8L807.2 280"/>
<path stroke-width="0.85" stroke-opacity="0.72" d="M742.7 350.9C742.9 349.7 743 345.9 743.6 343.6C744.2 341.4 745.4 338.9 746.4 337.3C747.3 335.7 749 334.6 749.5 334.1M749.5 334.1L753.6 335M753.6 335C754.4 334.5 756.7 332.8 758.2 332.3C759.7 331.7 760.9 331.4 762.7 331.8C764.5 332.2 767 333 769.1 334.5C771.2 336.1 773.5 338.5 775.4 340.9C777.4 343.3 779.5 347 780.9 349.1C782.3 351.2 783.2 352.9 783.6 353.6M742.7 351.4C744.2 351.3 748.3 351.1 751.8 350.9C755.3 350.8 759.8 350.3 763.6 350.4C767.4 350.6 771.4 351.2 774.5 351.8C777.7 352.5 780.7 353.8 782.7 354.4C784.8 354.9 786.1 354.9 786.8 355M742.7 351.4C742.2 352 739.9 353.9 739.5 355.4C739.2 357 739.3 359.2 740.5 360.9C741.6 362.6 744 364.8 746.4 365.9C748.7 367 753.2 367.4 754.5 367.7"/>
<path stroke-opacity="0.35" d="M852.5 140.5C854.6 140.1 861.2 137.2 865 138C868.8 138.8 872.7 142.4 875 145C877.3 147.6 878.6 151.2 879 153.8C879.4 156.3 877.8 159.4 877.5 160.5"/>
<path stroke-opacity="0.5" d="M940 341.2C945.4 341.1 962.4 340.6 972.5 340.7C982.6 340.9 993.4 341.6 1000.7 342.3C1007.9 342.9 1013.3 344.2 1015.8 344.6M926.2 372.5C930.2 372 942.3 370.8 950 369.5C957.7 368.2 968.8 365.8 972.5 365M910 417.5C907.5 419.2 900.8 423.8 895 427.5C889.2 431.2 881.7 436.2 875 440C868.3 443.8 860 448.2 855 450C850 451.8 846.7 450.4 845 450.5M748.8 417.5C748.5 419.2 748.5 424.5 747.5 427.5C746.5 430.5 743.3 434.2 742.5 435.5M670.8 258C669.4 259.7 665 264.5 662.3 268.2C659.6 271.9 655.9 278.1 654.6 280.1M623.1 309.1C622.8 311.4 621.1 318.2 621.4 322.8C621.7 327.3 623.1 332.4 624.8 336.4C626.5 340.4 630.5 344.9 631.6 346.6"/>
<path stroke-opacity="0.6" d="M670 222.5C666.7 224.3 655.8 229.1 650 233.5C644.2 237.9 638.7 245 635 249C631.3 253 630.1 254.4 628 257.2C625.9 260.1 623.4 264.5 622.5 266M805 407.5C808.3 407 818.3 405.8 825 404.5C831.7 403.2 838.8 402 845 400C851.2 398 857.5 395 862.5 392.5C867.5 390 872.2 387.1 875 385C877.8 382.9 878.3 380.8 879 380M892.5 393.8C892.9 395.2 895 399.4 895 402.5C895 405.6 892.9 410.8 892.5 412.5M650 260C652.1 259.2 658.3 256.7 662.5 255C666.7 253.3 672.9 250.8 675 250M608.8 442.5C611.5 442.3 619.8 442.1 625 441.2C630.2 440.4 635.4 439.4 640 437.5C644.6 435.6 649.2 432.5 652.5 430C655.8 427.5 658.8 423.8 660 422.5M927.5 475C928.8 479.2 931.9 491.7 935 500C938.1 508.3 942.5 516.7 946.2 525C950 533.3 954.4 544.2 957.5 550C960.6 555.8 963.8 558.3 965 560M815 540L811.2 550M887.5 605.5L900 610M716 287L722 288M720.3 292.4L724.7 290.4"/>
<path stroke-opacity="0.7" d="M565 266C566.7 265 571.8 261.1 575 259.8C578.2 258.4 582.5 258.3 584 258M500 550C501.7 547.9 506.7 540.4 510 537.5C513.3 534.6 518.3 533.3 520 532.5M512.5 590C511.7 592.5 508.8 600 507.5 605C506.2 610 504.6 615 505 620C505.4 625 507.9 630.8 510 635C512.1 639.2 516.2 643.3 517.5 645M500 660C501.2 660 505.2 661.2 507.5 660C509.8 658.8 512.7 653.8 513.8 652.5M518.8 712.5L521.2 721.5M940 371.5C942.9 371.1 951.9 369.8 957.3 368.9C962.8 368 970 366.4 972.5 365.9M905 270C907.1 273.3 913.3 283.8 917.5 290C921.7 296.2 927.1 303.2 930 307.5C932.9 311.8 934.2 314.2 935 315.5M706.5 269C706.7 271.2 707.6 278.2 707.5 282.5C707.4 286.8 706.2 292.9 706 295M850 500C849.2 503.3 846.2 513.3 845 520C843.8 526.7 842.7 533.3 842.5 540C842.3 546.7 843.5 556.7 843.8 560M700 441.2C701.2 440.6 705.2 439.6 707.5 437.5C709.8 435.4 712.9 430 714 428.5M700 451.2C701.7 450.6 707.1 449.4 710 447.5C712.9 445.6 716.2 441.2 717.5 440M715 426.2C716.5 427.9 720.8 433.1 723.8 436.2C726.7 439.4 731.2 442.9 732.5 445C733.8 447.1 731.5 448.3 731.2 449M652.5 387.5C651.2 385.8 646.7 381.7 645 377.5C643.3 373.3 642.7 366.5 642.5 362.5C642.3 358.5 643.5 355.2 643.8 353.8M620 310C620.4 312.5 620.8 320.4 622.5 325C624.2 329.6 627.1 334.2 630 337.5C632.9 340.8 638.3 343.8 640 345M925 420C925.8 425 927.9 439.6 930 450C932.1 460.4 934.6 473.3 937.5 482.5C940.4 491.7 944.2 498.3 947.5 505C950.8 511.7 955.6 516.7 957.5 522.5C959.4 528.3 958.5 534.6 958.8 540C959 545.4 958.8 552.5 958.8 555M938.8 422.5C938.8 427.1 939.4 441.7 938.8 450C938.1 458.3 935.6 468.8 935 472.5M948.8 445C950.2 449.2 955.6 461.7 957.5 470C959.4 478.3 960 488.8 960 495C960 501.2 959.2 504.4 957.5 507.5C955.8 510.6 951.2 512.7 950 513.8M962.5 450C963.1 454.2 966.2 466.7 966.2 475C966.2 483.3 964.6 493.8 962.5 500C960.4 506.2 955.2 510.4 953.8 512.5M611.1 295.5C610.9 298.3 608.9 306.8 609.4 312.5C610 318.2 612.3 324.7 614.6 329.6C616.8 334.4 620.2 338.4 623.1 341.5C625.9 344.6 630.2 347.2 631.6 348.3"/>
<path stroke-opacity="0.8" d="M721.1 251.2C721.2 254 721.4 263.1 721.3 268.2C721.2 273.3 720.8 277.9 720.3 281.8C719.8 285.8 718.6 290.4 718.2 292.1"/>
<path d="M339.5 46C339 48.1 336.8 54.3 336.5 58.5C336.2 62.7 337.6 66.8 338 71C338.4 75.2 339.2 79.5 339 83.5C338.8 87.5 337.1 93.1 336.8 95M382 46C382.4 47.7 384.6 52.2 384.5 56C384.4 59.8 382.2 63.9 381.5 68.5C380.8 73.1 380.7 78.6 380 83.5C379.3 88.4 377.9 95.6 377.5 98M307.5 122.2C309 121 313.3 117 316.2 114.8C319.2 112.5 321.2 111.4 325 108.5C328.8 105.6 335.1 100.5 338.8 97.2C342.4 94 344.7 90.6 347 89C349.3 87.4 350.3 86.8 352.5 87.5C354.7 88.2 357.1 91.8 360 93.5C362.9 95.2 367 96.6 370 97.5C373 98.4 376.7 98.8 378 99M360.5 94C363.1 95.1 372.5 97.9 376.2 100.5C380 103.1 380.6 106.1 383 109.8C385.4 113.4 388.5 117.8 390.5 122.2C392.5 126.7 395 133.9 395 136.5C395 139.1 392.4 138.5 390.5 138C388.6 137.5 384.7 134.2 383.5 133.5M383.5 133.5C383.8 132.7 384.4 129.7 385.5 128.5C386.6 127.3 389.2 126.8 390 126.5M299.5 127.2C300.4 127 302.6 125.6 305 125.5C307.4 125.4 308.8 127.2 313.8 126.5C318.8 125.8 328.1 123.2 335 121.5C341.9 119.8 350.2 117.5 355 116.5C359.8 115.5 361 114.5 363.8 115.5C366.5 116.5 368.5 119.5 371.2 122.2C374 125 377.9 129 380 132.2C382.1 135.5 383.3 140 384 141.5M300 127.2C299.9 128.3 299.8 131.6 299.5 133.5C299.2 135.4 299.1 137 298.5 138.5C297.9 140 296.5 139.8 296 142.2C295.5 144.8 295.6 151.6 295.5 153.5M296.5 141C297.9 140.4 301.9 138 305 137.5C308.1 137 309.6 137.8 315 137.8C320.4 137.8 330 137.9 337.5 137.5C345 137.1 354.2 135.5 360 135.5C365.8 135.5 368.8 135.8 372.5 137.5C376.2 139.2 379.8 143.5 382 145.5C384.2 147.5 385.6 148 386 149.8C386.4 151.5 384.8 155 384.5 156M295.5 153.5C297.1 153.3 300.1 152.6 305 152.5C309.9 152.4 317.9 152.2 325 153C332.1 153.8 340.5 155.8 347.5 157C354.5 158.2 362.2 159.4 367 160.5C371.8 161.6 373.8 162.1 376.2 163.5C378.7 164.9 380.6 168.1 381.5 169M384.5 154C384.2 155.6 383.8 160.2 383 163.5C382.2 166.8 380.8 171.9 380 174C379.2 176.1 378.6 175.8 378 176C377.4 176.2 376.5 175.6 376.2 175.5M367 171C368.1 171.3 371.7 172.2 373.8 173C375.8 173.8 378.7 173.4 379.5 176C380.3 178.6 379.2 185.6 378.5 188.5C377.8 191.4 376.9 192.1 375.5 193.5C374.1 194.9 371.8 196.1 370 197C368.2 197.9 365.8 198.7 365 199M395 136C395.3 135 395.3 131.4 397 130C398.7 128.6 402.8 127.1 405 127.5C407.2 127.9 409.3 129.7 410 132.2C410.7 134.8 409.8 139.5 409 143C408.2 146.5 407.3 149.6 405 153.5C402.7 157.4 397.9 161.9 395 166.5C392.1 171.1 389.6 176.1 387.5 181C385.4 185.9 384.6 191.2 382.5 196C380.4 200.8 377.7 205.9 375 209.8C372.3 213.6 367.7 217.5 366.2 219M323.8 177.2C324.6 178.1 326.9 181.2 328.8 182.2C330.6 183.3 331.9 183.2 335 183.5C338.1 183.8 344.8 184.2 347.5 184C350.2 183.8 350.1 183 351.2 182.2C352.4 181.5 353.9 180.6 354.5 179.8C355.1 178.9 354.3 176.4 355 177.2C355.7 178.1 357.4 182.4 358.8 184.8C360.1 187.1 362.3 190.4 363 191.5M317.5 190C319 189.8 324.1 190.2 326.2 189C328.4 187.8 329.8 184 330.5 183M321.2 195.5C323.5 194.8 330.2 191.8 335 191C339.8 190.2 345.8 190.2 350 190.5C354.2 190.8 357.7 191.7 360 193C362.3 194.3 362.8 195.9 364 198.5C365.2 201.1 366.8 205 367 208.5C367.2 212 365.3 217.9 365 219.8M321.2 195.5C320.7 197.2 318.7 201.8 318 206C317.3 210.2 317.2 217.7 317 221C316.8 224.3 316.9 224.7 317 226C317.1 227.3 317.4 228.5 317.5 229M318 206.5C320 205.9 325.1 203.7 330 203C334.9 202.3 342.5 202 347.5 202.5C352.5 203 357 204.5 360 206C363 207.5 364.6 210.6 365.5 211.5M317.5 218.5C319.6 217.7 325 214.4 330 213.5C335 212.6 342.7 212.4 347.5 213C352.3 213.6 356 215.8 358.8 217.2C361.5 218.7 363.3 219.2 364 221.5C364.7 223.8 363.3 228.1 363 231C362.7 233.9 362.2 237.7 362 239M305 249C305.2 247.2 305.5 241.2 306 238.5C306.5 235.8 304.8 234 308 232.5C311.2 231 318.4 229.8 325 229.5C331.6 229.2 341.3 229.9 347.5 231C353.7 232.1 358.7 233.5 362 236C365.3 238.5 366.5 243.1 367.5 246C368.5 248.9 368.1 251.3 368 253.5C367.9 255.7 367.2 258.1 367 259M305 249C302.5 249.8 295 252.4 290 254C285 255.6 280 257 275 258.5C270 260 264.4 262.1 260 263C255.6 263.9 249.8 266.8 248.8 264C247.7 261.2 250.6 254.4 253.8 246C256.9 237.6 264.4 219.7 267.5 213.5C270.6 207.3 270.6 209.8 272.5 209C274.4 208.2 277.7 208.6 278.8 208.5M295.5 153.5C294.8 156.4 292.6 165.6 291.2 171C289.9 176.4 289.2 180.2 287.5 186C285.8 191.8 283.5 200.2 281.2 206C279 211.8 275.6 217 274 221C272.4 225 271.1 227.2 271.5 229.8C271.9 232.2 273.6 233.5 276.2 236C278.9 238.5 283.7 242.3 287.5 244.8C291.3 247.2 297.1 249.5 299 250.5M278.8 238.5C280.2 239.3 284.7 242 287.5 243.5C290.3 245 294.2 246.8 295.5 247.5M293.8 255C296.9 254.3 305.6 251.9 312.5 251C319.4 250.1 327.9 249.4 335 249.8C342.1 250.1 349.5 251.3 355 253C360.5 254.7 363.8 257.8 368 260C372.2 262.2 378 265 380 266M727.5 163.5C723.8 167.2 712.9 178.5 705 186C697.1 193.5 689.2 201.5 680 208.5C670.8 215.5 658.3 221.8 650 228C641.7 234.2 635 241.3 630 246C625 250.7 622.6 252.7 620 256C617.4 259.3 615.4 264.3 614.5 266M688 207.2C685 210.5 676.8 220 670 226.5C663.2 233 652.7 241.1 647.5 246C642.3 250.9 641.2 252.7 638.8 256C636.2 259.3 633.5 264.3 632.5 266M530 519.5C532.5 518.1 540.6 514.1 545 511.2C549.4 508.4 553.3 505.8 556.2 502.5C559.2 499.2 561.5 493.3 562.5 491.5M551.2 464.5C552.9 466.2 558.3 470.3 561.2 475C564.2 479.7 566.7 486.7 568.8 492.5C570.8 498.3 572.7 505.8 573.8 510C574.8 514.2 574.8 516.2 575 517.5M575 517.5C573.8 520.8 570 531.2 567.5 537.5C565 543.8 562 550.4 560 555C558 559.6 556.2 563.3 555.5 565M560 513.8C561.2 513.6 565.2 512.2 567.5 513C569.8 513.8 572.7 517.8 573.8 518.8M523.8 522.5C524.6 524.2 527.1 529.2 528.8 532.5C530.4 535.8 533.3 537.9 533.8 542.5C534.2 547.1 531.7 554.6 531.2 560C530.8 565.4 530.4 570.4 531.2 575C532.1 579.6 535.4 585.4 536.2 587.5"/>
<path d="M528.8 592.5C530.2 591.2 533.1 589.4 537.5 585C541.9 580.6 549.2 571.7 555 566.2C560.8 560.8 567.5 556 572.5 552.5C577.5 549 580.4 547.5 585 545C589.6 542.5 595 539.2 600 537.5C605 535.8 610 536.2 615 535C620 533.8 625.8 530.4 630 530C634.2 529.6 635.8 532.4 640 532.5C644.2 532.6 650.8 530.1 655 530.5C659.2 530.9 662.1 533.5 665 535C667.9 536.5 670 539.1 672.5 539.5C675 539.9 677.7 537 680 537.5C682.3 538 684.2 540.2 686.2 542.5C688.3 544.8 691.5 549.8 692.5 551.2M692.5 543.8C693.3 544 695 543.1 697.5 545C700 546.9 704.2 553.1 707.5 555C710.8 556.9 714.6 554.6 717.5 556.2C720.4 557.9 722.9 562.5 725 565C727.1 567.5 727.9 570 730 571.2C732.1 572.5 734.6 570.2 737.5 572.5C740.4 574.8 744.6 582.5 747.5 585C750.4 587.5 752.5 585 755 587.5C757.5 590 760.2 597.1 762.5 600C764.8 602.9 766.7 602.5 768.8 605C770.8 607.5 773.1 611.9 775 615C776.9 618.1 778.1 622.3 780 623.8C781.9 625.2 784.2 621.9 786.2 623.8C788.3 625.6 791 632.3 792.5 635C794 637.7 794.6 639.2 795 640M518.8 667.5L525 657.5M525 657.5L531.2 660M531.2 660L537.5 653.8M537.5 653.8L545 657.5M545 657.5L553.8 650M553.8 650L558.8 658.8M558.8 658.8L570 652.5M570 652.5L580 662.5M580 662.5L588.8 653.8M592.5 657.5L605 672.5M605 672.5L617.5 665M617.5 665L622.5 680M640 680L647.5 678M681.2 460C684.4 462.9 693.5 470.8 700 477.5C706.5 484.2 713.3 492.1 720 500C726.7 507.9 733.3 516.2 740 525C746.7 533.8 753.8 544.2 760 552.5C766.2 560.8 772.1 568.3 777.5 575C782.9 581.7 788.8 588.8 792.5 592.5C796.2 596.2 798.8 596.7 800 597.5M767.5 460C770 461.7 777.1 466 782.5 470C787.9 474 797.1 481.5 800 483.8M705 462.5C706.2 462.7 710 464.2 712.5 463.8C715 463.3 718.8 460.6 720 460M795 640C792.5 640.4 784.2 640.8 780 642.5C775.8 644.2 772.3 646.7 770 650C767.7 653.3 766.5 658.3 766.2 662.5C766 666.7 767.9 672.1 768.8 675C769.6 677.9 770.8 679.2 771.2 680M800 645C797.5 645.4 789 645.4 785 647.5C781 649.6 777.9 653.8 776.2 657.5C774.6 661.2 774.6 666.2 775 670C775.4 673.8 778.1 678.3 778.8 680M622.5 680L625 684.5M625 684.5L647.5 678M647.5 678C647.9 679.6 649.1 684 650 687.5C650.9 691 652.5 696.9 653 698.8M653 698.8L672.5 693.8M672.5 693.8C673.1 692.7 675.3 686.5 676.2 687.5C677.2 688.5 677.3 696.6 678 700C678.7 703.4 680.1 706.7 680.5 708M680.5 708L697.5 705M697.5 705C697.7 707.1 698.1 713.8 698.8 717.5C699.4 721.2 700.8 725.4 701.2 727M701.2 727L713.8 723.8M713.8 723.8C714 722.5 714.7 715.6 715 716.2C715.3 716.9 714.7 724.4 715.5 727.5C716.3 730.6 719.2 733.8 720 735M720 735L735 732.5M735 732.5C735.2 735 735.2 743.5 736.2 747.5C737.3 751.5 740.4 754.8 741.2 756.2M741.2 756.2L753.8 752.5M753.8 752.5C753.5 754.6 752.9 761.7 752.5 765C752.1 768.3 751.5 771.2 751.2 772.5M751.2 772.5C754 772.7 764.4 772.4 767.5 773.8C770.6 775.1 769.6 779.4 770 780.5M770 780.5L765 796.2M765 796.2L780 803.8M780 803.8L772.5 817.5M772.5 817.5L787.5 825M787.5 825L782.5 836.2M782.5 836.2C783.8 837.1 787.1 839.6 790 841.2C792.9 842.9 798.3 845.4 800 846.2M785 846.2C784.2 848.5 782.1 855.2 780 860C777.9 864.8 774.4 871.7 772.5 875C770.6 878.3 769.4 879.2 768.8 880M771.2 875L782.5 878.8M517.5 677.5C516.2 680.8 512.3 690.4 510 697.5C507.7 704.6 504.6 713.8 503.8 720C502.9 726.2 504.4 731 505 735C505.6 739 507.1 742.5 507.5 744M771.2 680C773.1 681.5 778.5 686 782.5 688.8C786.5 691.5 792.1 694.8 795 696.2C797.9 697.7 799.2 697.3 800 697.5M778.8 680C780.6 680.8 786.5 683.7 790 685C793.5 686.3 798.3 687.5 800 688M380 266C381.7 267.3 386.7 271.2 390 273.8C393.3 276.3 398.3 280 400 281.2M242.5 286.2C245.4 286.1 253.8 285.1 260 285.5C266.2 285.9 274.2 287.4 280 288.8C285.8 290.1 291.2 292 295 293.8C298.8 295.5 301.2 298.1 302.5 299M232.5 298C235.4 298.1 244.6 297.8 250 298.8C255.4 299.7 260.4 301.7 265 303.8C269.6 305.8 274.3 308.9 277.5 311.2C280.7 313.6 282.9 316.9 284 318M287.5 301.5C289.4 300.9 296.2 298.4 298.8 298C301.2 297.6 301.9 298.8 302.5 299M302.5 299C303.3 300.4 305.4 303.6 307.5 307.5C309.6 311.4 312.5 317.3 315 322.5C317.5 327.7 321.2 336 322.5 338.8M322.5 338.8C324 339 328.8 340.2 331.2 340.2C333.8 340.2 336.5 339 337.5 338.8M337.5 338.8C338.8 336.9 342.1 331.5 345 327.5C347.9 323.5 350.8 318.3 355 315C359.2 311.7 364.2 309.4 370 307.5C375.8 305.6 386.7 304.4 390 303.8M366.2 332.5C369.4 331.5 379.4 327.6 385 326.2C390.6 324.9 397.5 324.8 400 324.5M287.5 301.2C287.1 303.5 285.6 310.2 285 315C284.4 319.8 284.2 325 283.8 330C283.3 335 282.7 342.5 282.5 345M282.5 345C281.5 346.2 276.7 350 276.2 352.5C275.8 355 278.5 357.5 280 360C281.5 362.5 284.6 366.2 285.5 367.5M282.5 345C283.8 344.9 286.7 344.1 290 344.5C293.3 344.9 299.5 346.5 302.5 347.5C305.5 348.5 307.1 350 308 350.5M305 312.5C305.2 315.4 305.8 324.2 306.2 330C306.8 335.8 307.7 344.6 308 347.5M310 312.5C310.1 314.6 310.1 320.4 310.5 325C310.9 329.6 311.5 335.8 312.5 340C313.5 344.2 315 347.7 316.2 350C317.5 352.3 318.3 352.9 320 353.8C321.7 354.6 323.8 355.4 326.2 355C328.8 354.6 332.7 352.1 335 351.2C337.3 350.4 339.2 350.2 340 350M343.8 331.2C343.9 333.5 344.3 339.8 344.5 345C344.7 350.2 344.9 359.6 345 362.5M345 362.5C347.5 362.3 356.3 361 360 361.2C363.7 361.5 365.8 363.3 367 363.8M367 363.8C367.1 364.8 368.5 368.5 367.5 370C366.5 371.5 362.3 372.1 361.2 372.5M365 317.5C365.1 321.2 365.2 332.3 365.5 340C365.8 347.7 366.8 359.8 367 363.8M326.2 355C326 356.7 325.4 361.4 325 365C324.6 368.6 324 374.6 323.8 376.5M268.8 306.2C269.6 308.5 273.3 314.4 273.8 320C274.2 325.6 272.7 333.3 271.2 340C269.8 346.7 267.7 352.9 265 360C262.3 367.1 256.9 376.7 255 382.5C253.1 388.3 253.5 390.8 253.8 395C254 399.2 256.9 402.9 256.2 407.5C255.6 412.1 252.7 417.9 250 422.5C247.3 427.1 243.3 432.1 240 435C236.7 437.9 231.7 439.2 230 440M230 440C233.3 439.6 243.8 438.8 250 437.5C256.2 436.2 262.9 433.8 267.5 432.5C272.1 431.2 275.8 430.4 277.5 430M352.5 425C353.8 424.5 357.5 422 360 422C362.5 422 365 425.2 367.5 425C370 424.8 372.5 421.3 375 420.5C377.5 419.7 380 419.5 382.5 420C385 420.5 387.3 424 390 423.8C392.7 423.5 396.2 419.4 398.8 418.8C401.2 418.1 401.5 420.2 405 420C408.5 419.8 413.8 417.3 420 417.5C426.2 417.7 438.8 420.6 442.5 421.2"/>
<path d="M405 420C407.1 421.7 414.2 425.8 417.5 430C420.8 434.2 423.1 440 425 445C426.9 450 428.1 457.5 428.8 460M442.5 421.2C444.2 423.1 449.8 428.1 452.5 432.5C455.2 436.9 457.3 442.9 458.8 447.5C460.2 452.1 460.8 457.9 461.2 460M700 164.5C702.5 164.9 710.4 167.1 715 167C719.6 166.9 722.5 166.1 727.5 163.8C732.5 161.4 739.2 156.7 745 153C750.8 149.3 757.5 144.5 762.5 141.5C767.5 138.5 771.2 135.9 775 135C778.8 134.1 781.2 134.9 785 136.2C788.8 137.6 793.8 139.9 797.5 143C801.2 146.1 804.2 150.5 807.5 155C810.8 159.5 815 165.4 817.5 170C820 174.6 821.7 180.4 822.5 182.5M757 145C755 148.3 748.7 157.1 745 165C741.3 172.9 738.3 183.3 735 192.5C731.7 201.7 727.9 212.1 725 220C722.1 227.9 720.2 233.5 717.5 240C714.8 246.5 711.7 253.8 708.8 258.8C705.8 263.8 701.5 268.1 700 270M727.5 163.8C725 166.5 717.1 175.2 712.5 180C707.9 184.8 702.1 190.4 700 192.5M743.8 181.2C746 180 752.3 175.6 757.5 173.8C762.7 171.9 770 170.1 775 170C780 169.9 784.5 170.9 787.5 173C790.5 175.1 792.1 180.9 793 182.5M766.2 167.5C768.5 166.7 775.6 162.5 780 162.5C784.4 162.5 789.2 165.2 792.5 167.5C795.8 169.8 798.3 173.8 800 176.2C801.7 178.8 802.1 181.5 802.5 182.5M742.5 195C745 193.3 752.5 187.5 757.5 185C762.5 182.5 767.7 180.9 772.5 180C777.3 179.1 782.7 178.5 786.2 179.5C789.8 180.5 792.5 185.1 793.8 186.2M790 153.8C792.1 155.6 799.4 161 802.5 165C805.6 169 807.5 174.1 808.8 177.5C810 180.9 809.8 184.2 810 185.5M805 146.2C806.7 148.1 812.5 153.5 815 157.5C817.5 161.5 819.2 168.3 820 170.5M810 140.5C811.7 141.1 816.7 144.2 820 144C823.3 143.8 826.7 140.5 830 139.5C833.3 138.5 836.7 137.3 840 138C843.3 138.7 847 141.1 850 143.8C853 146.4 857 149.4 858 153.8C859 158.1 857.6 164.7 856.2 170C854.9 175.3 852.3 181.8 850 185.5C847.7 189.2 843.8 191.3 842.5 192.5M815 190C816.2 187.9 820.8 181.7 822.5 177.5C824.2 173.3 824.6 167.1 825 165M820 189C821 187.8 824.6 184.2 826.2 182C827.9 179.8 829.4 176.6 830 175.5M830 140C831.7 141.7 837.5 146.2 840 150C842.5 153.8 844.5 157.9 845 162.5C845.5 167.1 844.5 172.8 843 177.5C841.5 182.2 837.4 188.3 836.2 190.5M822.5 141.2C824.2 143.1 830.2 148.5 832.5 152.5C834.8 156.5 836.2 160.4 836.2 165C836.3 169.6 834.7 176 833 180C831.3 184 827.4 187.5 826.2 189M850 143.8C851.7 145.6 857.9 150.6 860 155C862.1 159.4 862.8 165 862.5 170C862.2 175 860.1 181.2 858 185C855.9 188.8 851.3 191.7 850 193M862.5 155C864.6 156 871.2 158.3 875 161.2C878.8 164.2 882.8 168.5 885 172.5C887.2 176.5 888.4 180.8 888 185C887.6 189.2 884.7 194.8 882.5 197.5C880.3 200.2 876.2 200.8 875 201.5M885 173.8C887.1 174.8 893.8 177.7 897.5 180C901.2 182.3 904.5 184.6 907.5 187.5C910.5 190.4 913.4 193.8 915.5 197.5C917.6 201.2 918.6 205.8 920 210C921.4 214.2 923.1 220.8 923.8 223M900 185C900.5 186.7 903 191.6 903 195C903 198.4 900.5 203.8 900 205.5M908.8 192.5C909.5 194.2 912.8 199.1 913 202.5C913.2 205.9 910.5 211.2 910 213M915 200C915.5 201.9 918 208.5 918 211.2C918 214 915.5 215.6 915 216.5M836.2 192.5C839.4 192.8 848.5 192.8 855 194.5C861.5 196.2 868.3 199.9 875 202.5C881.7 205.1 888.8 207.3 895 210C901.2 212.7 907.7 216.4 912.5 218.8C917.3 221.1 922.1 223.1 924 224M923.8 223.8C926 225.6 933.5 230.6 937.5 235C941.5 239.4 944.8 244.6 947.5 250C950.2 255.4 952.3 260.8 953.8 267.5C955.2 274.2 956 282.9 956.2 290C956.5 297.1 955.9 303.8 955.5 310C955.1 316.2 954 324.6 953.8 327.5M960 280C961.2 282.5 966 290 967.5 295C969 300 968.8 305.8 968.8 310C968.8 314.2 968.1 317.1 967.5 320C966.9 322.9 965.4 326.2 965 327.5M836.2 192.5C838.1 195 843.5 201.2 847.5 207.5C851.5 213.8 856.7 222.5 860 230C863.3 237.5 865.4 245 867.5 252.5C869.6 260 871.2 267.9 872.5 275C873.8 282.1 873.8 288.3 875 295C876.2 301.7 878.5 310 880 315C881.5 320 882.4 322.1 883.8 325C885.1 327.9 887.3 331.2 888 332.5M842.5 202.5C844.6 205.4 851.2 213.8 855 220C858.8 226.2 862.7 235 865 240C867.3 245 867.9 246.7 868.8 250C869.6 253.3 869.8 258.3 870 260M860 202.5C860.8 205.4 863.8 213.8 865 220C866.2 226.2 867.4 233.3 867.5 240C867.6 246.7 865.5 253.3 865.5 260C865.5 266.7 866.3 273.3 867.5 280C868.7 286.7 870.4 293.3 872.5 300C874.6 306.7 877.9 315.2 880 320C882.1 324.8 883.2 326.2 885 328.8C886.8 331.3 889.6 334.4 890.5 335.5M870 232.5C871.7 236.2 875.8 247.1 880 255C884.2 262.9 890 271.7 895 280C900 288.3 906.2 298.3 910 305C913.8 311.7 916.2 317.5 917.5 320M875 260C877.1 263.8 883.3 275 887.5 282.5C891.7 290 896.7 298.8 900 305C903.3 311.2 906.2 317.5 907.5 320M885 295C885.8 297.5 887.5 305.4 890 310C892.5 314.6 897.3 319.6 900 322.5C902.7 325.4 904.2 326.2 906.2 327.5C908.3 328.8 911.5 330 912.5 330.5M877.5 270C877.9 273.3 878.8 283.8 880 290C881.2 296.2 883.3 302.9 885 307.5C886.7 312.1 888.3 314.5 890 317.5C891.7 320.5 894.2 324.2 895 325.5M718.8 285.5C718.1 287.9 716.4 294.2 715 300C713.6 305.8 711.5 315 710.5 320C709.5 325 709.2 326.7 709 330C708.8 333.3 709 338.3 709 340M709.5 340C710.2 343.3 711.8 352.9 713.8 360C715.7 367.1 720 378.8 721.2 382.5M742.5 415C745 415.8 752.8 418.4 757.5 419.5C762.2 420.6 768.3 421.2 770.5 421.5M911.5 350C912.9 348.9 915.7 345.1 920 343.5C924.3 341.9 934.6 341 937.5 340.5M895 365.5C895.4 364.6 895.8 361.3 897.5 360C899.2 358.7 902.5 358.9 905 357.5C907.5 356.1 911.5 353.2 912.5 351.5C913.5 349.8 911.5 348.2 911.2 347.5M912.5 351.5C914.6 350.8 922.1 347.2 925 347.5C927.9 347.8 929.8 350.4 930 353C930.2 355.6 927.1 361.3 926.5 363M912.5 396.2C910.4 398.1 904.6 404.4 900 407.5C895.4 410.6 890 412.1 885 415C880 417.9 873.8 421.7 870 425C866.2 428.3 864.2 432.4 862.5 435C860.8 437.6 860.4 439.6 860 440.5M952.5 387.5C952.1 390 949.6 397.1 950 402.5C950.4 407.9 952.5 414.2 955 420C957.5 425.8 962.3 432.1 965 437.5C967.7 442.9 970 447 971.2 452.5C972.5 458 972.3 467.5 972.5 470.5M947.5 405C948.3 408.3 950.4 419.2 952.5 425C954.6 430.8 958.1 435 960 440C961.9 445 963.3 448.3 963.8 455C964.2 461.7 963.1 472.5 962.5 480C961.9 487.5 961.7 494.2 960 500C958.3 505.8 953.8 512.5 952.5 515"/>
<path d="M922.5 420C923.3 423.3 925.8 432.9 927.5 440C929.2 447.1 930.8 455.4 932.5 462.5C934.2 469.6 935.6 475.8 937.5 482.5C939.4 489.2 941.7 497 943.8 502.5C945.8 508 949 513.3 950 515.5M937.5 422.5C937.7 426.2 937.7 437.9 938.8 445C939.8 452.1 942.3 459.1 943.8 465C945.2 470.9 946.9 477.9 947.5 480.5M945 445C945.8 447.5 947.9 454.2 950 460C952.1 465.8 955.8 474.1 957.5 480C959.2 485.9 959.6 492.9 960 495.5M970 480C971 482.5 975 489.2 976.2 495C977.5 500.8 978.1 508.8 977.5 515C976.9 521.2 975.4 528.3 972.5 532.5C969.6 536.7 962.1 538.8 960 540M885 440C882.5 441.7 875.8 447.1 870 450C864.2 452.9 855 455 850 457.5C845 460 842.5 461.2 840 465C837.5 468.8 835.8 475.4 835 480C834.2 484.6 834.2 486.7 835 492.5C835.8 498.3 838.3 507.1 840 515C841.7 522.9 843.3 532.5 845 540C846.7 547.5 849.2 556.7 850 560M890 440C887.5 443.3 880 453.3 875 460C870 466.7 864.6 473.3 860 480C855.4 486.7 850.8 493.3 847.5 500C844.2 506.7 842.1 513.3 840 520C837.9 526.7 836.2 533.3 835 540C833.8 546.7 832.9 556.7 832.5 560M860 480C858.3 482.1 854.2 486.7 850 492.5C845.8 498.3 840 507.9 835 515C830 522.1 824.2 528.8 820 535C815.8 541.2 811.7 549.6 810 552.5M897.5 455C899.2 457.1 905 462.9 907.5 467.5C910 472.1 911.7 477.1 912.5 482.5C913.3 487.9 911.2 494.6 912.5 500C913.8 505.4 916.2 508.8 920 515C923.8 521.2 930 531.2 935 537.5C940 543.8 945.8 548.8 950 552.5C954.2 556.2 958.3 558.8 960 560M907.5 440C907.9 443.3 909.2 454.2 910 460C910.8 465.8 912.1 472.5 912.5 475M910 500C908.3 501.2 904.2 505.2 900 507.5C895.8 509.8 887.9 512.3 885 513.8C882.1 515.2 881.7 515.6 882.5 516.2C883.3 516.9 888.8 517.3 890 517.5M907.5 520C906.2 522.5 903.3 531.2 900 535C896.7 538.8 892.1 540.6 887.5 542.5C882.9 544.4 873.8 545.4 872.5 546.2C871.2 547.1 876.2 547.7 880 547.5C883.8 547.3 892.5 545.4 895 545M910 515C909.6 518.3 909.2 528.8 907.5 535C905.8 541.2 901.7 548.3 900 552.5C898.3 556.7 897.9 558.8 897.5 560M952.5 515C952.9 517.5 954.2 524.6 955 530C955.8 535.4 956.7 542.5 957.5 547.5C958.3 552.5 959.6 557.9 960 560M932.5 460C932.1 463.3 930 474.1 930 480C930 485.9 932.1 492.9 932.5 495.5M836.2 492.5C836.9 495.4 838.1 502.9 840 510C841.9 517.1 845.4 527.9 847.5 535C849.6 542.1 851 548.3 852.5 552.5C854 556.7 855.6 558.8 856.2 560M733.8 447.5C736.5 447.9 743.1 447.1 750 450C756.9 452.9 766.7 459.6 775 465C783.3 470.4 792.5 477.1 800 482.5C807.5 487.9 814.9 494.1 820 497.5C825.1 500.9 828.8 502.1 830.5 503M737.5 436.2C736.9 438.1 736.2 444 733.8 447.5C731.2 451 726 454.8 722.5 457.5C719 460.2 715.4 462.7 712.5 463.8C709.6 464.8 706.2 464 705 464M700 481.2C703.3 484.8 713.3 494.8 720 502.5C726.7 510.2 732.9 517.9 740 527.5C747.1 537.1 758.8 554.6 762.5 560M700 555C701.2 554.8 705 553.3 707.5 553.8C710 554.2 713.1 556.5 715 557.5C716.9 558.5 718.3 559.6 719 560M400 281.2C403.3 282.7 413.3 287.1 420 290C426.7 292.9 433.8 296.9 440 298.8C446.2 300.6 453.1 301.5 457.5 301.2C461.9 301 464.1 298.9 466.2 297.5C468.4 296.1 469.8 293.8 470.5 293M470.5 293C471.2 295 473.2 300.1 475 305C476.8 309.9 480 317.9 481.2 322.5C482.5 327.1 483.5 329.2 482.5 332.5C481.5 335.8 477.9 339.4 475 342.5C472.1 345.6 467.7 349 465 351.2C462.3 353.5 459.8 355.4 458.8 356.2M458.8 356.2C457.7 354.8 456 351 452.5 347.5C449 344 442.9 338.3 437.5 335C432.1 331.7 426.2 329.2 420 327.5C413.8 325.8 403.3 325 400 324.5M450 416.2C449.4 415.2 446.2 412.3 446.2 410C446.2 407.7 446.9 404.8 450 402.5C453.1 400.2 459.6 397.5 465 396.2C470.4 395 476.7 394.6 482.5 395C488.3 395.4 495.4 397.7 500 398.8C504.6 399.8 508.3 401 510 401.5M444 418C444.1 416.2 443.1 410.5 444.5 407.5C445.9 404.5 448.7 402.3 452.5 400C456.3 397.7 462.1 395.2 467.5 393.8C472.9 392.3 479.6 391.5 485 391.2C490.4 391 495.8 391.8 500 392.5C504.2 393.2 508.3 395 510 395.5M480 392.5C481.2 390 483.3 382.5 487.5 377.5C491.7 372.5 497.9 366.7 505 362.5C512.1 358.3 521.7 355.2 530 352.5C538.3 349.8 547.5 347.9 555 346.2C562.5 344.6 569.2 344 575 342.5C580.8 341 587.5 338.3 590 337.5M485 410C484.2 408.3 480 404.2 480 400C480 395.8 481.7 389.6 485 385C488.3 380.4 494.2 376.2 500 372.5C505.8 368.8 512.5 365 520 362.5C527.5 360 536.7 359.2 545 357.5C553.3 355.8 561.2 354.4 570 352.5C578.8 350.6 592.9 347.3 597.5 346.2M487.5 410C487.1 407.5 483.8 399.6 485 395C486.2 390.4 490.4 386.7 495 382.5C499.6 378.3 506.2 373.1 512.5 370C518.8 366.9 526.2 365.4 532.5 363.8C538.8 362.1 547.1 360.6 550 360M515 401.2C514.8 399.8 512.5 396 513.8 392.5C515 389 518.1 384.6 522.5 380C526.9 375.4 533.8 369 540 365C546.2 361 552.5 358.8 560 356.2C567.5 353.8 577.9 351.7 585 350C592.1 348.3 599.6 346.9 602.5 346.2M530 396.2C530.8 394.4 531.7 389.4 535 385C538.3 380.6 544.2 374.6 550 370C555.8 365.4 562.9 360.8 570 357.5C577.1 354.2 588.8 351.2 592.5 350M550 390C551.7 387.9 555.8 382.1 560 377.5C564.2 372.9 569.6 367.1 575 362.5C580.4 357.9 587.1 352.9 592.5 350C597.9 347.1 605 345.8 607.5 345M587.5 385C586.9 383.3 583.3 379.2 583.8 375C584.2 370.8 587.3 364.2 590 360C592.7 355.8 596.2 352.3 600 350C603.8 347.7 610.4 346.9 612.5 346.2M597.5 385C597.5 382.5 596.2 375 597.5 370C598.8 365 601.2 359 605 355C608.8 351 617.5 347.7 620 346.2M620 385C618.8 382.9 613.5 376.7 612.5 372.5C611.5 368.3 612.1 363.8 613.8 360C615.4 356.2 621 351.7 622.5 350M640 391.2C637.9 389.8 630.4 386.5 627.5 382.5C624.6 378.5 623.3 372.1 622.5 367.5C621.7 362.9 622.5 357.1 622.5 355M580 258.8C578.3 259.4 572.7 260.6 570 262.5C567.3 264.4 564.6 267.1 563.8 270C562.9 272.9 563.1 277.1 565 280C566.9 282.9 570.8 285.6 575 287.5C579.2 289.4 585 291 590 291.2C595 291.5 600.4 290 605 288.8C609.6 287.5 615.4 284.6 617.5 283.8M622.5 250C621.2 252.1 616.2 258.8 615 262.5C613.8 266.2 614 269.4 615 272.5C616 275.6 620.2 279.8 621.2 281.2M632.5 250C631.2 252.1 626.2 258.7 625 262.5C623.8 266.3 625 271.2 625 273"/>
<path d="M652.5 250C650.4 252.1 643.8 258.8 640 262.5C636.2 266.2 633.3 268.8 630 272.5C626.7 276.2 622.9 280.8 620 285C617.1 289.2 614.2 293.3 612.5 297.5C610.8 301.7 610 305.4 610 310C610 314.6 610.8 320.4 612.5 325C614.2 329.6 617.1 333.8 620 337.5C622.9 341.2 626.7 345.2 630 347.5C633.3 349.8 636.7 350.8 640 351.2C643.3 351.7 648.3 350.2 650 350M617.5 283.8C614.6 285.2 605.4 289.8 600 292.5C594.6 295.2 589.6 296.7 585 300C580.4 303.3 575.8 308.3 572.5 312.5C569.2 316.7 566.5 321.2 565 325C563.5 328.8 562.9 332.1 563.8 335C564.6 337.9 569 341.2 570 342.5M570 342.5C571.7 342.1 575.4 341 580 340C584.6 339 594.6 336.9 597.5 336.2M610 301.2C607.5 301.7 599.2 302.3 595 303.8C590.8 305.2 587.5 307.3 585 310C582.5 312.7 580.6 316.7 580 320C579.4 323.3 580 326.9 581.2 330C582.5 333.1 586.5 337.3 587.5 338.8M607.5 312.5C605.4 312.7 598.5 312.1 595 313.8C591.5 315.4 587.9 319.4 586.2 322.5C584.6 325.6 585.2 330.8 585 332.5M640 287.5C639.2 289.6 635.4 295 635 300C634.6 305 635.4 312.1 637.5 317.5C639.6 322.9 643.8 328.5 647.5 332.5C651.2 336.5 655.4 340 660 341.2C664.6 342.5 672.5 340.2 675 340M668.8 261.2C666.5 264 658.5 272.3 655 277.5C651.5 282.7 649 287.5 647.5 292.5C646 297.5 645.8 302.1 646.2 307.5C646.7 312.9 648.5 320.2 650 325C651.5 329.8 654.2 334.4 655 336.2M700 285C697.9 287.1 692.1 294 687.5 297.5C682.9 301 677.5 304.4 672.5 306.2C667.5 308.1 662.5 308.5 657.5 308.8C652.5 309 645 307.7 642.5 307.5M700 313.8C697.9 315.6 691.7 322.3 687.5 325C683.3 327.7 677.1 329.2 675 330M665 310C664 312.5 660.2 320 658.8 325C657.3 330 656.5 335 656.2 340C656 345 656 350 657.5 355C659 360 662.1 366.2 665 370C667.9 373.8 671.7 376 675 377.5C678.3 379 683.3 378.8 685 379M660 360C660.8 361.7 663.1 367.3 665 370C666.9 372.7 670.2 375.2 671.2 376.2M400 421.2C402.5 420.7 410 418.5 415 418C420 417.5 425.6 417.5 430 418C434.4 418.5 434.6 420.9 441.2 421.2C447.9 421.6 463.1 421 470 420C476.9 419 477.5 417.1 482.5 415C487.5 412.9 493.8 410 500 407.5C506.2 405 512.9 402.1 520 400C527.1 397.9 534.2 396.3 542.5 395C550.8 393.7 561.2 392.6 570 392C578.8 391.4 587.9 391 595 391.2C602.1 391.5 609.6 393.3 612.5 393.8M602.5 391.2C606.2 392.1 618.8 394.4 625 396.2C631.2 398.1 635.4 400.2 640 402.5C644.6 404.8 649.6 407.5 652.5 410C655.4 412.5 657.1 415 657.5 417.5C657.9 420 655.4 423.8 655 425M612.5 393.8C615.4 395.6 623.8 400.2 630 405C636.2 409.8 643.3 416.2 650 422.5C656.7 428.8 663.8 435.8 670 442.5C676.2 449.2 683.3 457.9 687.5 462.5C691.7 467.1 693.8 468.8 695 470M620 397.5C623.3 400.4 634.2 409.6 640 415C645.8 420.4 652.5 427.5 655 430M441.2 421.2C443.1 423.5 449.4 430.2 452.5 435C455.6 439.8 458.3 444.2 460 450C461.7 455.8 462.1 466.7 462.5 470M402.5 421.2C405 423.5 413.3 429.8 417.5 435C421.7 440.2 425.2 446.7 427.5 452.5C429.8 458.3 430.6 467.1 431.2 470M640 447.5C642.1 446.7 648.3 444.6 652.5 442.5C656.7 440.4 660.8 438.3 665 435C669.2 431.7 674.2 426.2 677.5 422.5C680.8 418.8 683.8 414.2 685 412.5M642.5 450C644.6 450.4 650.8 452.5 655 452.5C659.2 452.5 662.9 451.7 667.5 450C672.1 448.3 677.9 445.8 682.5 442.5C687.1 439.2 692.1 433.3 695 430C697.9 426.7 699.2 423.8 700 422.5M680 452.5C681.7 452.9 686.7 455 690 455C693.3 455 698.3 452.9 700 452.5M675 447.5C677.1 447.5 683.3 448.1 687.5 447.5C691.7 446.9 697.9 444.4 700 443.8M550 465L557.5 470M900 610C903.3 610.8 913.8 612.1 920 615C926.2 617.9 932.5 622.5 937.5 627.5C942.5 632.5 946.9 639.2 950 645C953.1 650.8 955.2 656.7 956.2 662.5C957.3 668.3 957.3 673.8 956.2 680C955.2 686.2 952.7 693.3 950 700C947.3 706.7 943.8 713.3 940 720C936.2 726.7 931.9 733.3 927.5 740C923.1 746.7 916 756.7 913.8 760M1005 561.2C1003.3 562.3 999.2 566.7 995 567.5C990.8 568.3 985 567.5 980 566.2C975 565 969.6 562.7 965 560C960.4 557.3 956.2 553.3 952.5 550C948.8 546.7 944.2 541.7 942.5 540M900 540C899.4 543.3 896.2 552.5 896.2 560C896.2 567.5 898.1 577.9 900 585C901.9 592.1 904.2 597.5 907.5 602.5C910.8 607.5 915.8 612.3 920 615C924.2 617.7 928.8 619.2 932.5 618.8C936.2 618.3 940.2 614.8 942.5 612.5C944.8 610.2 945.6 606.2 946.2 605M905 585C906.7 586.5 910.8 591.9 915 593.8C919.2 595.6 925 596.9 930 596.2C935 595.6 940.8 592.3 945 590C949.2 587.7 952.6 586.7 955 582.5C957.4 578.3 958.9 571.2 959.5 565C960.1 558.8 958.9 548.3 958.8 545M915 577.5C916.7 579 921.2 584.8 925 586.2C928.8 587.7 933.8 587.7 937.5 586.2C941.2 584.8 945 581 947.5 577.5C950 574 951.9 569.2 952.5 565C953.1 560.8 951.5 554.6 951.2 552.5M907.5 562.5C908.8 564.6 912.3 572.1 915 575C917.7 577.9 922.3 579.2 923.8 580M932.5 547.5C933.3 550.4 935.8 558.8 937.5 565C939.2 571.2 941.5 580.8 942.5 585C943.5 589.2 943.5 589.2 943.8 590M892.5 561.2C891.2 562.7 888.3 567.3 885 570C881.7 572.7 876.7 576 872.5 577.5C868.3 579 863.3 579 860 578.8C856.7 578.5 853.8 576.7 852.5 576.2M865 540C866.7 540.8 871.2 544.2 875 545C878.8 545.8 883.8 545.8 887.5 545C891.2 544.2 895.8 540.8 897.5 540M845 540C845.8 542.5 847.1 549.2 850 555C852.9 560.8 858.3 568.8 862.5 575C866.7 581.2 870.8 587.4 875 592.5C879.2 597.6 885.4 603.3 887.5 605.5M835 545C835.8 548.3 837.9 557.5 840 565C842.1 572.5 844.6 582.5 847.5 590C850.4 597.5 854.2 604.6 857.5 610C860.8 615.4 864.4 619.6 867.5 622.5C870.6 625.4 874.8 626.7 876.2 627.5M833.8 545C832.7 548.3 828.8 558.3 827.5 565C826.2 571.7 825.8 578.8 826.2 585C826.7 591.2 828.1 597.1 830 602.5C831.9 607.9 835.5 614.2 837.5 617.5C839.5 620.8 841.2 621.7 842 622.5M840 547.5C838.8 550 834.2 557.5 832.5 562.5C830.8 567.5 830.4 575 830 577.5M780 580C781.7 582.3 786.7 590.4 790 593.8C793.3 597.1 798.3 599 800 600M800 600C805 600.1 819.6 600.1 830 600.5C840.4 600.9 852.9 601.7 862.5 602.5C872.1 603.3 883.3 605 887.5 605.5M780 640C781.7 640.2 786.2 639.6 790 641.2C793.8 642.9 799.2 646.5 802.5 650C805.8 653.5 808.3 657.9 810 662.5C811.7 667.1 812.9 672.9 812.5 677.5C812.1 682.1 810 686.7 807.5 690C805 693.3 801.2 696.9 797.5 697.5C793.8 698.1 787.9 695 785 693.8C782.1 692.5 780.8 690.6 780 690M780 675C781.2 676.7 784.6 682.5 787.5 685C790.4 687.5 794.2 689.6 797.5 690C800.8 690.4 805.8 687.9 807.5 687.5"/>
<path d="M780 623.8C781 623.8 784.2 621.7 786.2 623.8C788.3 625.8 791.5 634.2 792.5 636.2M805 651.2L822.5 648.8M822.5 648.8L833.8 670M833.8 670L846.2 670M846.2 670L857.5 690M857.5 690C857.1 690.8 854 693.5 855 694.5C856 695.5 862.3 696 863.8 696.2M863.8 696.2L868.8 711.2M868.8 711.2L877.5 713.8M877.5 713.8L882.5 732.5M882.5 732.5C882.1 731.5 879.2 727.5 880 726.2C880.8 725 886.2 725.2 887.5 725M887.5 725L890 742.5M890 742.5L893.8 752.5M888.8 690C889.4 694.2 891.4 707.1 892.5 715C893.6 722.9 894.9 730 895.5 737.5C896.1 745 896.1 756.2 896.2 760M910 700C909.4 702.1 908.3 708.3 906.2 712.5C904.2 716.7 899 722.9 897.5 725M913.8 760L898.8 777.5M890 740C890.6 742.1 892.7 748.3 893.8 752.5C894.8 756.7 896 760.8 896.2 765C896.5 769.2 895.1 774.2 895.5 777.5C895.9 780.8 898.8 782.5 898.8 785C898.7 787.5 895.5 789.6 895 792.5C894.5 795.4 896.3 799.2 895.5 802.5C894.7 805.8 892.2 809.6 890 812.5C887.8 815.4 883.8 817.1 882.5 820C881.2 822.9 883.5 827.7 882.5 830C881.5 832.3 878.8 831.7 876.2 833.8C873.8 835.8 870.6 840.4 867.5 842.5C864.4 844.6 860.8 844.8 857.5 846.2C854.2 847.7 850.8 850 847.5 851.2C844.2 852.5 840.4 852.5 837.5 853.8C834.6 855 832.9 858.5 830 858.8C827.1 859 824.2 856.5 820 855C815.8 853.5 809.6 851.9 805 850C800.4 848.1 795.8 845.8 792.5 843.8C789.2 841.7 787.1 839.4 785 837.5C782.9 835.6 780.8 833.3 780 832.5M780 822.5C781 823.3 785.8 825.4 786.2 827.5C786.7 829.6 781.7 832.5 782.5 835C783.3 837.5 789.8 841.2 791.2 842.5M785 846.2C784.6 847.3 783.3 850.2 782.5 852.5C781.7 854.8 780.4 858.8 780 860M792.5 846.2C794.6 847.3 800.8 849.4 805 852.5C809.2 855.6 814.2 860.8 817.5 865C820.8 869.2 823.8 875.4 825 877.5M817.5 856.2C818.5 857.3 822.3 859.8 823.8 862.5C825.2 865.2 825.8 870.8 826.2 872.5M230 467.5C232.5 467.2 239.2 466.8 245 465.5C250.8 464.2 261.7 460.9 265 460M230 532C232.1 532.5 238.8 533.7 242.5 535C246.2 536.3 249.4 538.9 252.5 540C255.6 541.1 259.8 541.2 261.2 541.5M336.2 544.5C338.1 544.5 344.4 544.1 347.5 544.5C350.6 544.9 352.5 546.9 355 547C357.5 547.1 359.6 545.1 362.5 545C365.4 544.9 368.8 546.5 372.5 546.2C376.2 546 380.4 544.2 385 543.8C389.6 543.3 394.2 544.3 400 543.8C405.8 543.2 414.2 541.5 420 540.5C425.8 539.5 429.2 538.2 435 537.5C440.8 536.8 447.5 537.1 455 536.2C462.5 535.4 471.7 534 480 532.5C488.3 531 496.7 529.2 505 527C513.3 524.8 525.8 520.8 530 519.5M430 460C430.2 463.3 431.7 473.3 431.2 480C430.8 486.7 429.4 493.8 427.5 500C425.6 506.2 422.9 511.9 420 517.5C417.1 523.1 413.3 529.4 410 533.8C406.7 538.1 401.7 542.1 400 543.8M461.2 460C461.5 463.3 463.4 473.3 463 480C462.6 486.7 460.9 493.5 458.8 500C456.6 506.5 453.5 512.9 450 518.8C446.5 524.6 440.4 531.6 437.5 535C434.6 538.4 433.3 538.3 432.5 539M435 540C433.8 543.3 430 553.3 427.5 560C425 566.7 422.3 573.3 420 580C417.7 586.7 414.6 593.8 413.8 600C412.9 606.2 413.5 612.5 415 617.5C416.5 622.5 420.2 627.2 422.5 630C424.8 632.8 427.7 633.8 428.8 634.5M451.2 538.8C449 541.5 441.2 549.8 437.5 555C433.8 560.2 430.6 565 428.8 570C426.9 575 425.6 580 426.2 585C426.9 590 429.4 595.4 432.5 600C435.6 604.6 440.4 609.4 445 612.5C449.6 615.6 456 617.8 460 618.8C464 619.7 467.3 618.1 468.8 618M447.5 561.2C445.8 563.5 440.8 570.2 437.5 575C434.2 579.8 430.4 585 427.5 590C424.6 595 421.7 600 420 605C418.3 610 417.9 617.5 417.5 620M487.5 537.5C486.7 540.4 483.5 549.2 482.5 555C481.5 560.8 480.8 566.7 481.2 572.5C481.7 578.3 483.1 585.4 485 590C486.9 594.6 491.2 598.3 492.5 600M520 527.5C517.5 530 509.2 537.1 505 542.5C500.8 547.9 497.1 555.4 495 560C492.9 564.6 492.9 568.3 492.5 570M530 557.5C527.9 559.6 521.7 565 517.5 570C513.3 575 509.2 580.8 505 587.5C500.8 594.2 496.2 602.9 492.5 610C488.8 617.1 485 623.3 482.5 630C480 636.7 477.9 643.3 477.5 650C477.1 656.7 479 665 480 670C481 675 483.1 678.3 483.8 680M515 587.5C513.8 590.4 509.2 599.2 507.5 605C505.8 610.8 504.6 617.5 505 622.5C505.4 627.5 508.3 632.1 510 635C511.7 637.9 514.2 639.2 515 640M495 605C494.4 607.5 491.5 615.4 491.2 620C491 624.6 493.3 630.4 493.8 632.5M482.5 635C484.2 637.1 488.8 643.8 492.5 647.5C496.2 651.2 501.2 655.4 505 657.5C508.8 659.6 513.3 659.6 515 660M480 620C480.4 623.3 481.2 633.3 482.5 640C483.8 646.7 485.8 653.3 487.5 660C489.2 666.7 491.7 676.7 492.5 680M530 590C529.2 593.3 526.2 602.5 525 610C523.8 617.5 522.7 627.5 522.5 635C522.3 642.5 524.2 649.6 523.8 655C523.3 660.4 521.2 663.8 520 667.5C518.8 671.2 516.9 675.8 516.2 677.5M525 522.5L530 532.5M230 713.8C231.2 713.3 235.2 712 237.5 711.2C239.8 710.5 242.7 709.8 243.8 709.5M316.2 700C319.4 700.3 328.5 700.8 335 702C341.5 703.2 349.2 705.2 355 707C360.8 708.8 366.5 711 370 712.5C373.5 714 375.2 715.6 376.2 716.2M376.2 716.2C378.5 715.6 384.4 712.9 390 712.5C395.6 712.1 402.5 712.9 410 713.8C417.5 714.6 426.7 716 435 717.5C443.3 719 452.5 720.6 460 722.5C467.5 724.4 476.7 727.7 480 728.8M480 728.8C480.8 729.8 483.3 732.3 485 735C486.7 737.7 489.2 743.3 490 745M482.5 728.8C483.8 727.7 487.1 724 490 722.5C492.9 721 498.3 720 500 719.5M374.5 716.2C374.7 720.6 375.8 731.9 375.5 742.5C375.2 753.1 374.7 767.1 372.5 780C370.3 792.9 366.2 809.2 362.5 820C358.8 830.8 353.3 838.3 350 845C346.7 851.7 343.8 857.5 342.5 860M380.8 716.2C380.8 721 381.8 733.5 381.2 745C380.7 756.5 379.4 772.5 377.5 785C375.6 797.5 372.9 810 370 820C367.1 830 362.5 838.5 360 845C357.5 851.5 355.8 856.5 355 858.8M517.5 680C516.2 683.3 512.1 693.3 510 700C507.9 706.7 505.8 714.2 505 720C504.2 725.8 504.5 730.9 505 735C505.5 739.1 507.5 742.9 508 744.5M485 680C485.8 680.6 488.3 683.3 490 683.8C491.7 684.2 494.2 682.7 495 682.5M518.8 713.8L521.2 721.2M702.4 265.6C702.1 267.2 701.7 272.3 700.7 275C699.7 277.8 697.1 281 696.4 282.2M706.6 294.6C706.2 296.2 705.2 300.9 704.1 304C702.9 307.1 700.5 311.8 699.8 313.4M618 258C617.3 260 613.7 266.5 613.7 269.9C613.7 273.3 615.6 276.2 618 278.4C620.4 280.7 626.5 282.7 628.2 283.5M624.8 268.2C624.5 269.3 622.5 273 623.1 275C623.7 277.1 627.3 279.6 628.2 280.5"/>
<path d="M752.8 254.8C753.8 256.2 757 260.6 758.5 263.5C760 266.4 761.1 269.5 761.5 272.5C761.9 275.5 761.5 279 760.8 281.5C760 284 758.3 286 757 287.5C755.7 289 753.5 290 752.8 290.5M721 290.5C722.2 289.5 725.8 286.2 728.5 284.5C731.2 282.8 734.5 280.9 737.5 280C740.5 279.1 744 278.9 746.5 279.2C749 279.6 751 281.1 752.5 282.2C754 283.4 755.2 285.6 755.8 286.3M722.5 293.5C723.8 293.6 727.2 294.5 730 294.2C732.8 294 736.2 292.9 739 292C741.8 291.1 745.5 289.5 746.8 289M847 242.5C848.5 243.6 853.1 247 856 249.2C858.9 251.5 863 254.9 864.4 256M808 277C809.5 276.5 813.8 274.4 817 274C820.2 273.6 824 273.8 827.5 274.3C831 274.8 834.5 276.1 838 277C841.5 277.9 845.2 279.2 848.5 280C851.8 280.8 854.8 281.4 857.5 281.5C860.2 281.6 863.8 280.9 865 280.8M827.5 286.8C829.2 286.6 834.5 286.5 838 286C841.5 285.5 845.2 284.4 848.5 283.8C851.8 283.1 854.8 282.3 857.5 281.8C860.2 281.3 863.8 280.9 865 280.8"/>
<path stroke-width="1.1" stroke-opacity="0.6" d="M743.2 303.6C743.3 304.7 743.4 308 743.8 310C744.2 312 745.2 314.5 745.5 315.5"/>
<path stroke-width="1.1" d="M790 244.3L799 238.6M796 244L808 236.8M803.5 242.8L817 235.9"/>
<path stroke-width="1.1" stroke-opacity="0.85" d="M754.5 367.7C756.1 367.6 760.6 367.5 763.6 366.8C766.7 366.1 770.1 365.1 772.7 363.6C775.3 362.2 777.3 359.7 779.1 358.2C780.9 356.6 782.9 355 783.6 354.4"/>
<path stroke-width="1.2" d="M803.5 269.5C805 269.2 809 268 812.5 268C816 268 820.8 268.8 824.5 269.5C828.2 270.2 831.7 271.4 835 272.5C838.3 273.6 842.8 275.8 844.3 276.4"/>
<path stroke-width="1.2" d="M730 237.5C731.2 234.6 734.2 225 737.5 220C740.8 215 745 211.3 750 207.5C755 203.7 760.8 199.7 767.5 197C774.2 194.3 786.2 192.2 790 191.2M890 333C893.8 332.2 904.6 329.1 912.5 328.5C920.4 327.9 927.1 328.8 937.5 329.5C947.9 330.2 964.6 331.8 975 332.5C985.4 333.2 995.8 333.8 1000 334"/>
<path stroke-width="1.3" d="M391.2 582.5C391.9 583.8 391.9 587.3 395 590C398.1 592.7 404.2 596.5 410 598.8C415.8 601 423.3 603.1 430 603.8C436.7 604.4 443.8 603.5 450 602.5C456.2 601.5 462.1 599.8 467.5 597.5C472.9 595.2 480 590.2 482.5 588.8"/>
<path stroke-width="1.4" d="M1000 334C1002.7 334.3 1010.7 335.1 1015.8 335.5C1021 336 1027.5 336.3 1031 336.8C1034.5 337.4 1035.7 338.6 1036.6 339M1036.6 339C1036.8 339.3 1037.7 339.9 1037.5 340.7C1037.3 341.5 1037.1 342.4 1035.3 343.8C1033.5 345.1 1031.7 346.5 1026.7 349C1021.6 351.4 1009.4 356.5 1005 358.5C1000.6 360.5 1000.8 360.5 1000 360.9M323 339.5C324.4 339.8 328.9 341 331.2 341C333.6 341 336 339.5 337 339.2M721.2 382.5C722.3 385.4 725.6 395.6 727.5 400C729.4 404.4 730 406.2 732.5 408.8C735 411.2 740.8 414 742.5 415M879 377.5C879.4 378.8 879.7 383.4 881.5 385.5C883.3 387.6 885.7 389.6 890 390.2C894.3 390.9 899.6 390.8 907.5 389.5C915.4 388.2 927.1 385.3 937.5 382.5C947.9 379.7 959.6 376.1 970 372.5C980.4 368.9 995 362.9 1000 361"/>
<path stroke-width="1.4" d="M787.5 460L800 467.5M737.5 436.2C740.8 437.3 750 439 757.5 442.5C765 446 774.2 452.1 782.5 457.5C790.8 462.9 799.6 469.6 807.5 475C815.4 480.4 824.3 486.8 830 490C835.7 493.2 839.6 493.3 841.5 494M837.7 237.4L847 242.5"/>
<path stroke-width="1.5" d="M744.2 248.5C745.1 249.1 748.1 250.8 749.5 251.8C750.9 252.9 752.2 254.3 752.8 254.8"/>
<path stroke-width="1.6" stroke-opacity="0.55" d="M746.4 300C746.6 301.4 747 305.6 747.7 308.2C748.4 310.8 749.8 313.8 750.5 315.5C751.1 317.1 751.2 317.7 751.4 318.2"/>
<path stroke="#1e1c14" stroke-width="1.8" d="M286.6 367.5L230 826M358.4 364.5L290.5 880"/>
<path stroke-width="2" stroke-opacity="0.75" d="M744.4 300C744.5 301.4 744.8 305.6 745.5 308.2C746.1 310.8 747.5 313.7 748.2 315.5C748.9 317.2 749.5 318.1 749.8 318.6"/>
<path stroke-width="2.2" d="M723.7 249.7C724.5 249.2 726.5 247.2 728.5 246.6C730.5 245.9 733.4 245.5 736 245.8C738.6 246.1 742.9 248.1 744.2 248.5"/>
<path stroke-width="2.7" d="M790.6 242.5C791.2 241.8 792.1 239.5 794.5 238.3C796.9 237.2 800.8 236.2 805 235.6C809.2 235 815.8 234.6 820 234.6C824.2 234.5 827.5 234.8 830.5 235.3C833.5 235.8 836.5 237.1 837.7 237.4"/>
<g transform="translate(230 240) scale(0.25)"><ellipse cx="418" cy="160" rx="77" ry="82" fill="none" stroke="#423f36" stroke-width="3.4"/></g>
<g transform="translate(720 300) scale(0.0909)"><ellipse cx="508" cy="135" rx="60" ry="30" transform="rotate(25 508 135)" fill="#242424" stroke="none"/></g>
<g transform="translate(230 680) scale(0.25)"><ellipse cx="468" cy="768" rx="54" ry="50" fill="none" stroke="#423f36" stroke-width="3.4"/><ellipse cx="466" cy="770" rx="32" ry="32" fill="none" stroke="#423f36" stroke-width="3.4"/></g>

</g>
</svg>
</div>
<div class="abs" style="left:1198px;top:46px;width:2px;height:834px;background:#262626"></div>
<div class="abs" style="left:230px;top:878.500px;width:970px;height:1.500px;background:#1c1c1c"></div>

</body>
</html>
